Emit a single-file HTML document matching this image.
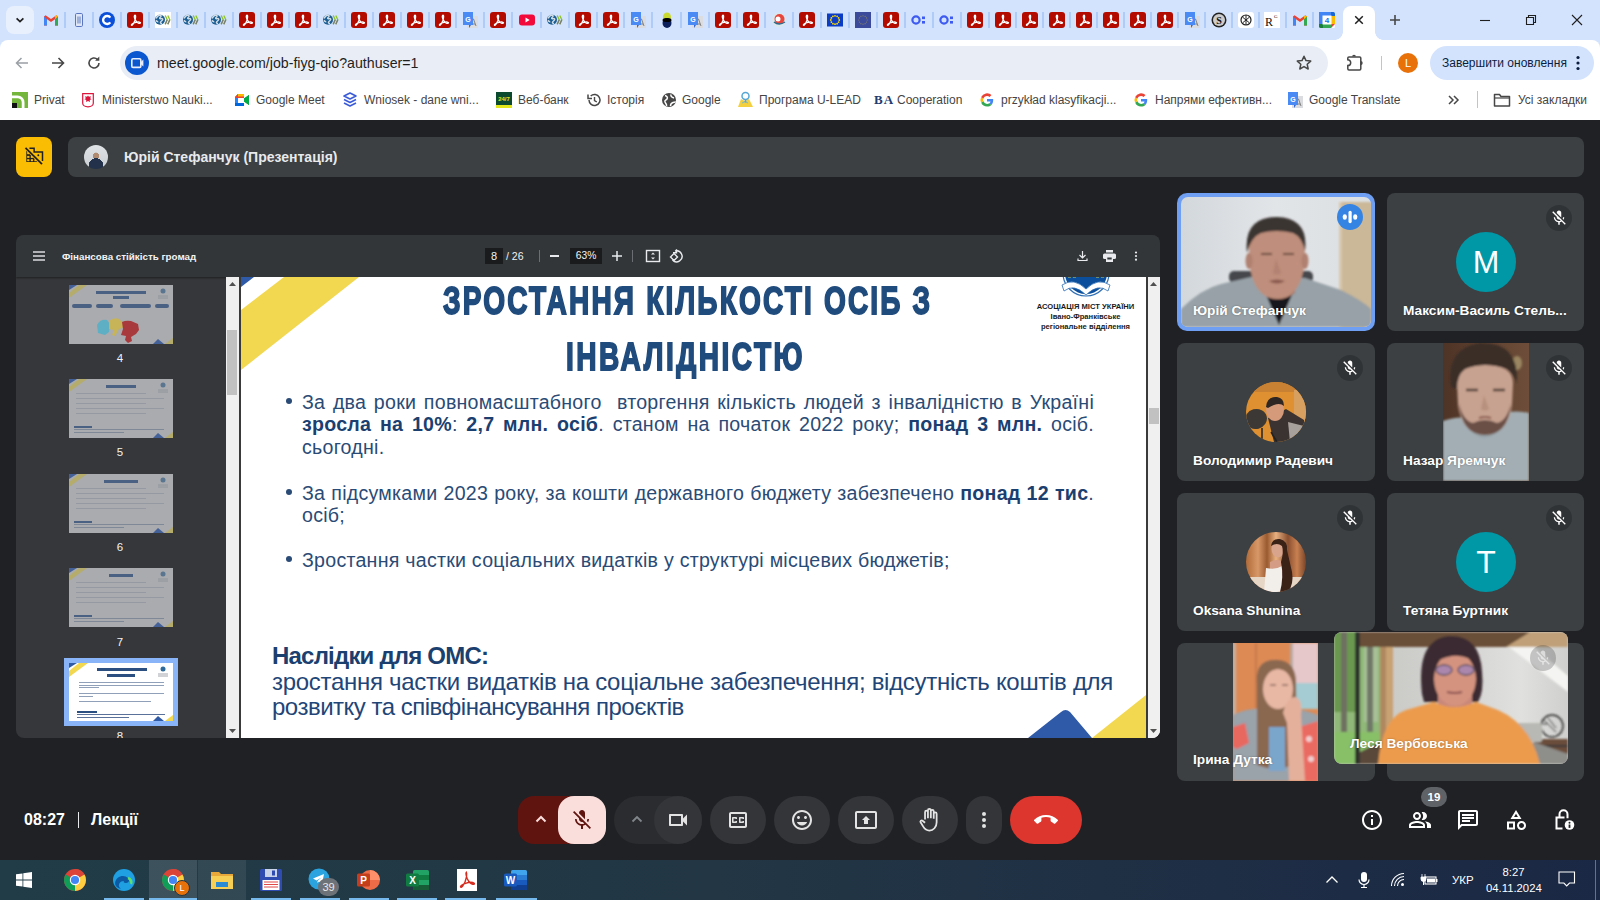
<!DOCTYPE html><html><head><meta charset="utf-8"><style>
*{margin:0;padding:0;box-sizing:border-box}
html,body{width:1600px;height:900px;overflow:hidden;background:#202124;font-family:"Liberation Sans",sans-serif;position:relative}
.a{position:absolute}
svg{display:block;overflow:visible}
.t{position:absolute;white-space:nowrap}
b{font-weight:bold}
</style></head><body>
<div class="a" style="left:0;top:120px;width:1600px;height:740px;background:#202124"></div><div class="a" style="left:0;top:0;width:1600px;height:50px;background:#d3e3fd"></div><div class="a" style="left:6px;top:6px;width:28px;height:28px;border-radius:8px;background:#e9f0fd"></div><svg class="a" style="left:14px;top:14px;" width="12" height="12" viewBox="0 0 12 12"><path d="M2.6 4.3 L6 7.6 L9.4 4.3" fill="none" stroke="#1f1f1f" stroke-width="1.7"/></svg><svg class="a" style="left:43px;top:12px;" width="16" height="16" viewBox="0 0 16 16"><path d="M1 4.5v9h3V7.2L8 10l4-2.8v6.3h3v-9l-1.6-1.2L8 7.1 2.6 3.3z" fill="#ea4335"/><path d="M1 4.5v9h3V7.2z" fill="#4285f4"/><path d="M12 7.2v6.3h3v-9z" fill="#34a853"/><path d="M12 7.2 15 4.5l-1.6-1.2L12 4.3z" fill="#fbbc04"/></svg><div class="a" style="left:64px;top:12px;width:2px;height:16px;background:#afcbf8"></div><svg class="a" style="left:71px;top:12px;" width="16" height="16" viewBox="0 0 16 16"><rect x="4.5" y="1.5" width="7" height="13" rx="1.2" fill="#dfe7f7" stroke="#5b76c0" stroke-width="1"/><path d="M7 4.5v7M9 4.5v7" stroke="#6a82c6" stroke-width="1.1"/></svg><div class="a" style="left:92px;top:12px;width:2px;height:16px;background:#afcbf8"></div><svg class="a" style="left:99px;top:12px;" width="16" height="16" viewBox="0 0 16 16"><circle cx="8" cy="8" r="8" fill="#0b4fd8"/><path d="M11.3 5.6A4 4 0 1 0 11.3 10.4" fill="none" stroke="#fff" stroke-width="2.4"/></svg><div class="a" style="left:120px;top:12px;width:2px;height:16px;background:#afcbf8"></div><svg class="a" style="left:127px;top:12px;" width="16" height="16" viewBox="0 0 16 16"><rect x="0" y="0" width="16" height="16" rx="3" fill="#b30b00"/><path d="M8 3.2c-.9 0-.9 1.6-.2 3.6.6 1.6 1.8 3.4 3.2 4.2 1.3.7 2.6.5 2.5-.3-.1-.7-1.6-.9-3.6-.6-1.9.3-3.9 1.1-5 2.1-.8.7-.5 1.4.2 1 .9-.6 1.9-2.5 2.6-4.3.6-1.7 1-3.1.9-4.2C8.6 3.6 8.4 3.2 8 3.2z" fill="none" stroke="#fff" stroke-width="1.3"/></svg><div class="a" style="left:148px;top:12px;width:2px;height:16px;background:#afcbf8"></div><svg class="a" style="left:155px;top:12px;" width="16" height="16" viewBox="0 0 16 16"><rect width="16" height="16" fill="#fff"/><circle cx="5" cy="7.8" r="5" fill="#1a5d92"/><path d="M1.2 6.5c1-2.5 3-3.5 4.5-3 1 .5 0 1.5-.8 2.3s.5 1.2 1.5.8 1.8.5 1 1.5-2 1.5-2 2.5 1 1 1.5.5M.8 8.5c1 .5 1.5 1.5 2.5 1.2" fill="none" stroke="#d0dde6" stroke-width="1.4"/><path d="M10.2 3.5l2 4.3-2 4.5M12.8 3.5l2 4.3-2 4.5" fill="none" stroke="#8fc22a" stroke-width="1.3"/><path d="M12.2 7.8l-2 4.5M14.8 7.8l-2 4.5" fill="none" stroke="#7a7a7a" stroke-width="1.3"/></svg><div class="a" style="left:176px;top:12px;width:2px;height:16px;background:#afcbf8"></div><svg class="a" style="left:183px;top:12px;" width="16" height="16" viewBox="0 0 16 16"><circle cx="5" cy="7.8" r="5" fill="#1a5d92"/><path d="M1.2 6.5c1-2.5 3-3.5 4.5-3 1 .5 0 1.5-.8 2.3s.5 1.2 1.5.8 1.8.5 1 1.5-2 1.5-2 2.5 1 1 1.5.5M.8 8.5c1 .5 1.5 1.5 2.5 1.2" fill="none" stroke="#d0dde6" stroke-width="1.4"/><path d="M10.2 3.5l2 4.3-2 4.5M12.8 3.5l2 4.3-2 4.5" fill="none" stroke="#8fc22a" stroke-width="1.3"/><path d="M12.2 7.8l-2 4.5M14.8 7.8l-2 4.5" fill="none" stroke="#7a7a7a" stroke-width="1.3"/></svg><div class="a" style="left:204px;top:12px;width:2px;height:16px;background:#afcbf8"></div><svg class="a" style="left:211px;top:12px;" width="16" height="16" viewBox="0 0 16 16"><circle cx="5" cy="7.8" r="5" fill="#1a5d92"/><path d="M1.2 6.5c1-2.5 3-3.5 4.5-3 1 .5 0 1.5-.8 2.3s.5 1.2 1.5.8 1.8.5 1 1.5-2 1.5-2 2.5 1 1 1.5.5M.8 8.5c1 .5 1.5 1.5 2.5 1.2" fill="none" stroke="#d0dde6" stroke-width="1.4"/><path d="M10.2 3.5l2 4.3-2 4.5M12.8 3.5l2 4.3-2 4.5" fill="none" stroke="#8fc22a" stroke-width="1.3"/><path d="M12.2 7.8l-2 4.5M14.8 7.8l-2 4.5" fill="none" stroke="#7a7a7a" stroke-width="1.3"/></svg><div class="a" style="left:232px;top:12px;width:2px;height:16px;background:#afcbf8"></div><svg class="a" style="left:239px;top:12px;" width="16" height="16" viewBox="0 0 16 16"><rect x="0" y="0" width="16" height="16" rx="3" fill="#b30b00"/><path d="M8 3.2c-.9 0-.9 1.6-.2 3.6.6 1.6 1.8 3.4 3.2 4.2 1.3.7 2.6.5 2.5-.3-.1-.7-1.6-.9-3.6-.6-1.9.3-3.9 1.1-5 2.1-.8.7-.5 1.4.2 1 .9-.6 1.9-2.5 2.6-4.3.6-1.7 1-3.1.9-4.2C8.6 3.6 8.4 3.2 8 3.2z" fill="none" stroke="#fff" stroke-width="1.3"/></svg><div class="a" style="left:260px;top:12px;width:2px;height:16px;background:#afcbf8"></div><svg class="a" style="left:267px;top:12px;" width="16" height="16" viewBox="0 0 16 16"><rect x="0" y="0" width="16" height="16" rx="3" fill="#b30b00"/><path d="M8 3.2c-.9 0-.9 1.6-.2 3.6.6 1.6 1.8 3.4 3.2 4.2 1.3.7 2.6.5 2.5-.3-.1-.7-1.6-.9-3.6-.6-1.9.3-3.9 1.1-5 2.1-.8.7-.5 1.4.2 1 .9-.6 1.9-2.5 2.6-4.3.6-1.7 1-3.1.9-4.2C8.6 3.6 8.4 3.2 8 3.2z" fill="none" stroke="#fff" stroke-width="1.3"/></svg><div class="a" style="left:288px;top:12px;width:2px;height:16px;background:#afcbf8"></div><svg class="a" style="left:295px;top:12px;" width="16" height="16" viewBox="0 0 16 16"><rect x="0" y="0" width="16" height="16" rx="3" fill="#b30b00"/><path d="M8 3.2c-.9 0-.9 1.6-.2 3.6.6 1.6 1.8 3.4 3.2 4.2 1.3.7 2.6.5 2.5-.3-.1-.7-1.6-.9-3.6-.6-1.9.3-3.9 1.1-5 2.1-.8.7-.5 1.4.2 1 .9-.6 1.9-2.5 2.6-4.3.6-1.7 1-3.1.9-4.2C8.6 3.6 8.4 3.2 8 3.2z" fill="none" stroke="#fff" stroke-width="1.3"/></svg><div class="a" style="left:316px;top:12px;width:2px;height:16px;background:#afcbf8"></div><svg class="a" style="left:323px;top:12px;" width="16" height="16" viewBox="0 0 16 16"><circle cx="5" cy="7.8" r="5" fill="#1a5d92"/><path d="M1.2 6.5c1-2.5 3-3.5 4.5-3 1 .5 0 1.5-.8 2.3s.5 1.2 1.5.8 1.8.5 1 1.5-2 1.5-2 2.5 1 1 1.5.5M.8 8.5c1 .5 1.5 1.5 2.5 1.2" fill="none" stroke="#d0dde6" stroke-width="1.4"/><path d="M10.2 3.5l2 4.3-2 4.5M12.8 3.5l2 4.3-2 4.5" fill="none" stroke="#8fc22a" stroke-width="1.3"/><path d="M12.2 7.8l-2 4.5M14.8 7.8l-2 4.5" fill="none" stroke="#7a7a7a" stroke-width="1.3"/></svg><div class="a" style="left:344px;top:12px;width:2px;height:16px;background:#afcbf8"></div><svg class="a" style="left:351px;top:12px;" width="16" height="16" viewBox="0 0 16 16"><rect x="0" y="0" width="16" height="16" rx="3" fill="#b30b00"/><path d="M8 3.2c-.9 0-.9 1.6-.2 3.6.6 1.6 1.8 3.4 3.2 4.2 1.3.7 2.6.5 2.5-.3-.1-.7-1.6-.9-3.6-.6-1.9.3-3.9 1.1-5 2.1-.8.7-.5 1.4.2 1 .9-.6 1.9-2.5 2.6-4.3.6-1.7 1-3.1.9-4.2C8.6 3.6 8.4 3.2 8 3.2z" fill="none" stroke="#fff" stroke-width="1.3"/></svg><div class="a" style="left:372px;top:12px;width:2px;height:16px;background:#afcbf8"></div><svg class="a" style="left:379px;top:12px;" width="16" height="16" viewBox="0 0 16 16"><rect x="0" y="0" width="16" height="16" rx="3" fill="#b30b00"/><path d="M8 3.2c-.9 0-.9 1.6-.2 3.6.6 1.6 1.8 3.4 3.2 4.2 1.3.7 2.6.5 2.5-.3-.1-.7-1.6-.9-3.6-.6-1.9.3-3.9 1.1-5 2.1-.8.7-.5 1.4.2 1 .9-.6 1.9-2.5 2.6-4.3.6-1.7 1-3.1.9-4.2C8.6 3.6 8.4 3.2 8 3.2z" fill="none" stroke="#fff" stroke-width="1.3"/></svg><div class="a" style="left:400px;top:12px;width:2px;height:16px;background:#afcbf8"></div><svg class="a" style="left:407px;top:12px;" width="16" height="16" viewBox="0 0 16 16"><rect x="0" y="0" width="16" height="16" rx="3" fill="#b30b00"/><path d="M8 3.2c-.9 0-.9 1.6-.2 3.6.6 1.6 1.8 3.4 3.2 4.2 1.3.7 2.6.5 2.5-.3-.1-.7-1.6-.9-3.6-.6-1.9.3-3.9 1.1-5 2.1-.8.7-.5 1.4.2 1 .9-.6 1.9-2.5 2.6-4.3.6-1.7 1-3.1.9-4.2C8.6 3.6 8.4 3.2 8 3.2z" fill="none" stroke="#fff" stroke-width="1.3"/></svg><div class="a" style="left:428px;top:12px;width:2px;height:16px;background:#afcbf8"></div><svg class="a" style="left:435px;top:12px;" width="16" height="16" viewBox="0 0 16 16"><rect x="0" y="0" width="16" height="16" rx="3" fill="#b30b00"/><path d="M8 3.2c-.9 0-.9 1.6-.2 3.6.6 1.6 1.8 3.4 3.2 4.2 1.3.7 2.6.5 2.5-.3-.1-.7-1.6-.9-3.6-.6-1.9.3-3.9 1.1-5 2.1-.8.7-.5 1.4.2 1 .9-.6 1.9-2.5 2.6-4.3.6-1.7 1-3.1.9-4.2C8.6 3.6 8.4 3.2 8 3.2z" fill="none" stroke="#fff" stroke-width="1.3"/></svg><div class="a" style="left:455px;top:12px;width:2px;height:16px;background:#afcbf8"></div><svg class="a" style="left:462px;top:12px;" width="16" height="16" viewBox="0 0 16 16"><rect x="5" y="4" width="11" height="12" fill="#dadce0"/><path d="M9 9l2.5-2 2.5 7M10 12h3" stroke="#777" stroke-width=".9" fill="none"/><path d="M1 0h10v13H1z" fill="#4a8af4"/><path d="M9 13l-2 3v-3z" fill="#3367d6"/><text x="6" y="9.5" font-size="7" font-weight="bold" fill="#fff" text-anchor="middle" font-family="Liberation Sans">G</text></svg><div class="a" style="left:483px;top:12px;width:2px;height:16px;background:#afcbf8"></div><svg class="a" style="left:490px;top:12px;" width="16" height="16" viewBox="0 0 16 16"><rect x="0" y="0" width="16" height="16" rx="3" fill="#b30b00"/><path d="M8 3.2c-.9 0-.9 1.6-.2 3.6.6 1.6 1.8 3.4 3.2 4.2 1.3.7 2.6.5 2.5-.3-.1-.7-1.6-.9-3.6-.6-1.9.3-3.9 1.1-5 2.1-.8.7-.5 1.4.2 1 .9-.6 1.9-2.5 2.6-4.3.6-1.7 1-3.1.9-4.2C8.6 3.6 8.4 3.2 8 3.2z" fill="none" stroke="#fff" stroke-width="1.3"/></svg><div class="a" style="left:511px;top:12px;width:2px;height:16px;background:#afcbf8"></div><svg class="a" style="left:519px;top:12px;" width="16" height="16" viewBox="0 0 16 16"><rect x="0" y="2.5" width="16" height="11" rx="3" fill="#f20a3b"/><path d="M6.5 5.5v5l4.2-2.5z" fill="#fff"/></svg><div class="a" style="left:540px;top:12px;width:2px;height:16px;background:#afcbf8"></div><svg class="a" style="left:547px;top:12px;" width="16" height="16" viewBox="0 0 16 16"><circle cx="5" cy="7.8" r="5" fill="#1a5d92"/><path d="M1.2 6.5c1-2.5 3-3.5 4.5-3 1 .5 0 1.5-.8 2.3s.5 1.2 1.5.8 1.8.5 1 1.5-2 1.5-2 2.5 1 1 1.5.5M.8 8.5c1 .5 1.5 1.5 2.5 1.2" fill="none" stroke="#d0dde6" stroke-width="1.4"/><path d="M10.2 3.5l2 4.3-2 4.5M12.8 3.5l2 4.3-2 4.5" fill="none" stroke="#8fc22a" stroke-width="1.3"/><path d="M12.2 7.8l-2 4.5M14.8 7.8l-2 4.5" fill="none" stroke="#7a7a7a" stroke-width="1.3"/></svg><div class="a" style="left:568px;top:12px;width:2px;height:16px;background:#afcbf8"></div><svg class="a" style="left:575px;top:12px;" width="16" height="16" viewBox="0 0 16 16"><rect x="0" y="0" width="16" height="16" rx="3" fill="#b30b00"/><path d="M8 3.2c-.9 0-.9 1.6-.2 3.6.6 1.6 1.8 3.4 3.2 4.2 1.3.7 2.6.5 2.5-.3-.1-.7-1.6-.9-3.6-.6-1.9.3-3.9 1.1-5 2.1-.8.7-.5 1.4.2 1 .9-.6 1.9-2.5 2.6-4.3.6-1.7 1-3.1.9-4.2C8.6 3.6 8.4 3.2 8 3.2z" fill="none" stroke="#fff" stroke-width="1.3"/></svg><div class="a" style="left:596px;top:12px;width:2px;height:16px;background:#afcbf8"></div><svg class="a" style="left:603px;top:12px;" width="16" height="16" viewBox="0 0 16 16"><rect x="0" y="0" width="16" height="16" rx="3" fill="#b30b00"/><path d="M8 3.2c-.9 0-.9 1.6-.2 3.6.6 1.6 1.8 3.4 3.2 4.2 1.3.7 2.6.5 2.5-.3-.1-.7-1.6-.9-3.6-.6-1.9.3-3.9 1.1-5 2.1-.8.7-.5 1.4.2 1 .9-.6 1.9-2.5 2.6-4.3.6-1.7 1-3.1.9-4.2C8.6 3.6 8.4 3.2 8 3.2z" fill="none" stroke="#fff" stroke-width="1.3"/></svg><div class="a" style="left:623px;top:12px;width:2px;height:16px;background:#afcbf8"></div><svg class="a" style="left:630px;top:12px;" width="16" height="16" viewBox="0 0 16 16"><rect x="5" y="4" width="11" height="12" fill="#dadce0"/><path d="M9 9l2.5-2 2.5 7M10 12h3" stroke="#777" stroke-width=".9" fill="none"/><path d="M1 0h10v13H1z" fill="#4a8af4"/><path d="M9 13l-2 3v-3z" fill="#3367d6"/><text x="6" y="9.5" font-size="7" font-weight="bold" fill="#fff" text-anchor="middle" font-family="Liberation Sans">G</text></svg><div class="a" style="left:651px;top:12px;width:2px;height:16px;background:#afcbf8"></div><svg class="a" style="left:659px;top:12px;" width="16" height="16" viewBox="0 0 16 16"><ellipse cx="8" cy="5" rx="4" ry="4.5" fill="#c9d92f"/><ellipse cx="8" cy="11" rx="4.5" ry="5" fill="#0a1f5c"/><ellipse cx="8" cy="8" rx="4.5" ry="2" fill="#000"/></svg><div class="a" style="left:680px;top:12px;width:2px;height:16px;background:#afcbf8"></div><svg class="a" style="left:687px;top:12px;" width="16" height="16" viewBox="0 0 16 16"><rect x="5" y="4" width="11" height="12" fill="#dadce0"/><path d="M9 9l2.5-2 2.5 7M10 12h3" stroke="#777" stroke-width=".9" fill="none"/><path d="M1 0h10v13H1z" fill="#4a8af4"/><path d="M9 13l-2 3v-3z" fill="#3367d6"/><text x="6" y="9.5" font-size="7" font-weight="bold" fill="#fff" text-anchor="middle" font-family="Liberation Sans">G</text></svg><div class="a" style="left:708px;top:12px;width:2px;height:16px;background:#afcbf8"></div><svg class="a" style="left:715px;top:12px;" width="16" height="16" viewBox="0 0 16 16"><rect x="0" y="0" width="16" height="16" rx="3" fill="#b30b00"/><path d="M8 3.2c-.9 0-.9 1.6-.2 3.6.6 1.6 1.8 3.4 3.2 4.2 1.3.7 2.6.5 2.5-.3-.1-.7-1.6-.9-3.6-.6-1.9.3-3.9 1.1-5 2.1-.8.7-.5 1.4.2 1 .9-.6 1.9-2.5 2.6-4.3.6-1.7 1-3.1.9-4.2C8.6 3.6 8.4 3.2 8 3.2z" fill="none" stroke="#fff" stroke-width="1.3"/></svg><div class="a" style="left:736px;top:12px;width:2px;height:16px;background:#afcbf8"></div><svg class="a" style="left:743px;top:12px;" width="16" height="16" viewBox="0 0 16 16"><rect x="0" y="0" width="16" height="16" rx="3" fill="#b30b00"/><path d="M8 3.2c-.9 0-.9 1.6-.2 3.6.6 1.6 1.8 3.4 3.2 4.2 1.3.7 2.6.5 2.5-.3-.1-.7-1.6-.9-3.6-.6-1.9.3-3.9 1.1-5 2.1-.8.7-.5 1.4.2 1 .9-.6 1.9-2.5 2.6-4.3.6-1.7 1-3.1.9-4.2C8.6 3.6 8.4 3.2 8 3.2z" fill="none" stroke="#fff" stroke-width="1.3"/></svg><div class="a" style="left:764px;top:12px;width:2px;height:16px;background:#afcbf8"></div><svg class="a" style="left:771px;top:12px;" width="16" height="16" viewBox="0 0 16 16"><circle cx="8" cy="8" r="7.5" fill="#d8e6ee"/><circle cx="8.5" cy="7" r="5" fill="#e8453c"/><path d="M3 10q5 4 11 0" stroke="#2d6a8a" stroke-width="1.5" fill="none"/><circle cx="7" cy="7" r="2.5" fill="#fff"/></svg><div class="a" style="left:792px;top:12px;width:2px;height:16px;background:#afcbf8"></div><svg class="a" style="left:799px;top:12px;" width="16" height="16" viewBox="0 0 16 16"><rect x="0" y="0" width="16" height="16" rx="3" fill="#b30b00"/><path d="M8 3.2c-.9 0-.9 1.6-.2 3.6.6 1.6 1.8 3.4 3.2 4.2 1.3.7 2.6.5 2.5-.3-.1-.7-1.6-.9-3.6-.6-1.9.3-3.9 1.1-5 2.1-.8.7-.5 1.4.2 1 .9-.6 1.9-2.5 2.6-4.3.6-1.7 1-3.1.9-4.2C8.6 3.6 8.4 3.2 8 3.2z" fill="none" stroke="#fff" stroke-width="1.3"/></svg><div class="a" style="left:820px;top:12px;width:2px;height:16px;background:#afcbf8"></div><svg class="a" style="left:827px;top:12px;" width="16" height="16" viewBox="0 0 16 16"><rect x="0" y="1.5" width="16" height="13" fill="#0b3cc5"/><circle cx="12.20" cy="8.00" r=".9" fill="#ffdd00"/><circle cx="11.64" cy="10.10" r=".9" fill="#ffdd00"/><circle cx="10.10" cy="11.64" r=".9" fill="#ffdd00"/><circle cx="8.00" cy="12.20" r=".9" fill="#ffdd00"/><circle cx="5.90" cy="11.64" r=".9" fill="#ffdd00"/><circle cx="4.36" cy="10.10" r=".9" fill="#ffdd00"/><circle cx="3.80" cy="8.00" r=".9" fill="#ffdd00"/><circle cx="4.36" cy="5.90" r=".9" fill="#ffdd00"/><circle cx="5.90" cy="4.36" r=".9" fill="#ffdd00"/><circle cx="8.00" cy="3.80" r=".9" fill="#ffdd00"/><circle cx="10.10" cy="4.36" r=".9" fill="#ffdd00"/><circle cx="11.64" cy="5.90" r=".9" fill="#ffdd00"/></svg><div class="a" style="left:848px;top:12px;width:2px;height:16px;background:#afcbf8"></div><svg class="a" style="left:855px;top:12px;" width="16" height="16" viewBox="0 0 16 16"><rect x="0" y="0" width="16" height="16" fill="#3b4a9a"/><circle cx="12.20" cy="8.00" r=".6" fill="#8a8560"/><circle cx="11.64" cy="10.10" r=".6" fill="#8a8560"/><circle cx="10.10" cy="11.64" r=".6" fill="#8a8560"/><circle cx="8.00" cy="12.20" r=".6" fill="#8a8560"/><circle cx="5.90" cy="11.64" r=".6" fill="#8a8560"/><circle cx="4.36" cy="10.10" r=".6" fill="#8a8560"/><circle cx="3.80" cy="8.00" r=".6" fill="#8a8560"/><circle cx="4.36" cy="5.90" r=".6" fill="#8a8560"/><circle cx="5.90" cy="4.36" r=".6" fill="#8a8560"/><circle cx="8.00" cy="3.80" r=".6" fill="#8a8560"/><circle cx="10.10" cy="4.36" r=".6" fill="#8a8560"/><circle cx="11.64" cy="5.90" r=".6" fill="#8a8560"/></svg><div class="a" style="left:876px;top:12px;width:2px;height:16px;background:#afcbf8"></div><svg class="a" style="left:883px;top:12px;" width="16" height="16" viewBox="0 0 16 16"><rect x="0" y="0" width="16" height="16" rx="3" fill="#b30b00"/><path d="M8 3.2c-.9 0-.9 1.6-.2 3.6.6 1.6 1.8 3.4 3.2 4.2 1.3.7 2.6.5 2.5-.3-.1-.7-1.6-.9-3.6-.6-1.9.3-3.9 1.1-5 2.1-.8.7-.5 1.4.2 1 .9-.6 1.9-2.5 2.6-4.3.6-1.7 1-3.1.9-4.2C8.6 3.6 8.4 3.2 8 3.2z" fill="none" stroke="#fff" stroke-width="1.3"/></svg><div class="a" style="left:904px;top:12px;width:2px;height:16px;background:#afcbf8"></div><svg class="a" style="left:911px;top:12px;" width="16" height="16" viewBox="0 0 16 16"><circle cx="5" cy="8" r="3.6" fill="none" stroke="#3d5af1" stroke-width="2.2"/><rect x="11" y="4.5" width="3" height="2.6" fill="#3d5af1"/><rect x="11" y="9" width="3" height="2.6" fill="#3d5af1"/></svg><div class="a" style="left:932px;top:12px;width:2px;height:16px;background:#afcbf8"></div><svg class="a" style="left:939px;top:12px;" width="16" height="16" viewBox="0 0 16 16"><circle cx="5" cy="8" r="3.6" fill="none" stroke="#3d5af1" stroke-width="2.2"/><rect x="11" y="4.5" width="3" height="2.6" fill="#3d5af1"/><rect x="11" y="9" width="3" height="2.6" fill="#3d5af1"/></svg><div class="a" style="left:960px;top:12px;width:2px;height:16px;background:#afcbf8"></div><svg class="a" style="left:967px;top:12px;" width="16" height="16" viewBox="0 0 16 16"><rect x="0" y="0" width="16" height="16" rx="3" fill="#b30b00"/><path d="M8 3.2c-.9 0-.9 1.6-.2 3.6.6 1.6 1.8 3.4 3.2 4.2 1.3.7 2.6.5 2.5-.3-.1-.7-1.6-.9-3.6-.6-1.9.3-3.9 1.1-5 2.1-.8.7-.5 1.4.2 1 .9-.6 1.9-2.5 2.6-4.3.6-1.7 1-3.1.9-4.2C8.6 3.6 8.4 3.2 8 3.2z" fill="none" stroke="#fff" stroke-width="1.3"/></svg><div class="a" style="left:988px;top:12px;width:2px;height:16px;background:#afcbf8"></div><svg class="a" style="left:995px;top:12px;" width="16" height="16" viewBox="0 0 16 16"><rect x="0" y="0" width="16" height="16" rx="3" fill="#b30b00"/><path d="M8 3.2c-.9 0-.9 1.6-.2 3.6.6 1.6 1.8 3.4 3.2 4.2 1.3.7 2.6.5 2.5-.3-.1-.7-1.6-.9-3.6-.6-1.9.3-3.9 1.1-5 2.1-.8.7-.5 1.4.2 1 .9-.6 1.9-2.5 2.6-4.3.6-1.7 1-3.1.9-4.2C8.6 3.6 8.4 3.2 8 3.2z" fill="none" stroke="#fff" stroke-width="1.3"/></svg><div class="a" style="left:1015px;top:12px;width:2px;height:16px;background:#afcbf8"></div><svg class="a" style="left:1022px;top:12px;" width="16" height="16" viewBox="0 0 16 16"><rect x="0" y="0" width="16" height="16" rx="3" fill="#b30b00"/><path d="M8 3.2c-.9 0-.9 1.6-.2 3.6.6 1.6 1.8 3.4 3.2 4.2 1.3.7 2.6.5 2.5-.3-.1-.7-1.6-.9-3.6-.6-1.9.3-3.9 1.1-5 2.1-.8.7-.5 1.4.2 1 .9-.6 1.9-2.5 2.6-4.3.6-1.7 1-3.1.9-4.2C8.6 3.6 8.4 3.2 8 3.2z" fill="none" stroke="#fff" stroke-width="1.3"/></svg><div class="a" style="left:1042px;top:12px;width:2px;height:16px;background:#afcbf8"></div><svg class="a" style="left:1049px;top:12px;" width="16" height="16" viewBox="0 0 16 16"><rect x="0" y="0" width="16" height="16" rx="3" fill="#b30b00"/><path d="M8 3.2c-.9 0-.9 1.6-.2 3.6.6 1.6 1.8 3.4 3.2 4.2 1.3.7 2.6.5 2.5-.3-.1-.7-1.6-.9-3.6-.6-1.9.3-3.9 1.1-5 2.1-.8.7-.5 1.4.2 1 .9-.6 1.9-2.5 2.6-4.3.6-1.7 1-3.1.9-4.2C8.6 3.6 8.4 3.2 8 3.2z" fill="none" stroke="#fff" stroke-width="1.3"/></svg><div class="a" style="left:1069px;top:12px;width:2px;height:16px;background:#afcbf8"></div><svg class="a" style="left:1076px;top:12px;" width="16" height="16" viewBox="0 0 16 16"><rect x="0" y="0" width="16" height="16" rx="3" fill="#b30b00"/><path d="M8 3.2c-.9 0-.9 1.6-.2 3.6.6 1.6 1.8 3.4 3.2 4.2 1.3.7 2.6.5 2.5-.3-.1-.7-1.6-.9-3.6-.6-1.9.3-3.9 1.1-5 2.1-.8.7-.5 1.4.2 1 .9-.6 1.9-2.5 2.6-4.3.6-1.7 1-3.1.9-4.2C8.6 3.6 8.4 3.2 8 3.2z" fill="none" stroke="#fff" stroke-width="1.3"/></svg><div class="a" style="left:1096px;top:12px;width:2px;height:16px;background:#afcbf8"></div><svg class="a" style="left:1103px;top:12px;" width="16" height="16" viewBox="0 0 16 16"><rect x="0" y="0" width="16" height="16" rx="3" fill="#b30b00"/><path d="M8 3.2c-.9 0-.9 1.6-.2 3.6.6 1.6 1.8 3.4 3.2 4.2 1.3.7 2.6.5 2.5-.3-.1-.7-1.6-.9-3.6-.6-1.9.3-3.9 1.1-5 2.1-.8.7-.5 1.4.2 1 .9-.6 1.9-2.5 2.6-4.3.6-1.7 1-3.1.9-4.2C8.6 3.6 8.4 3.2 8 3.2z" fill="none" stroke="#fff" stroke-width="1.3"/></svg><div class="a" style="left:1123px;top:12px;width:2px;height:16px;background:#afcbf8"></div><svg class="a" style="left:1130px;top:12px;" width="16" height="16" viewBox="0 0 16 16"><rect x="0" y="0" width="16" height="16" rx="3" fill="#b30b00"/><path d="M8 3.2c-.9 0-.9 1.6-.2 3.6.6 1.6 1.8 3.4 3.2 4.2 1.3.7 2.6.5 2.5-.3-.1-.7-1.6-.9-3.6-.6-1.9.3-3.9 1.1-5 2.1-.8.7-.5 1.4.2 1 .9-.6 1.9-2.5 2.6-4.3.6-1.7 1-3.1.9-4.2C8.6 3.6 8.4 3.2 8 3.2z" fill="none" stroke="#fff" stroke-width="1.3"/></svg><div class="a" style="left:1150px;top:12px;width:2px;height:16px;background:#afcbf8"></div><svg class="a" style="left:1157px;top:12px;" width="16" height="16" viewBox="0 0 16 16"><rect x="0" y="0" width="16" height="16" rx="3" fill="#b30b00"/><path d="M8 3.2c-.9 0-.9 1.6-.2 3.6.6 1.6 1.8 3.4 3.2 4.2 1.3.7 2.6.5 2.5-.3-.1-.7-1.6-.9-3.6-.6-1.9.3-3.9 1.1-5 2.1-.8.7-.5 1.4.2 1 .9-.6 1.9-2.5 2.6-4.3.6-1.7 1-3.1.9-4.2C8.6 3.6 8.4 3.2 8 3.2z" fill="none" stroke="#fff" stroke-width="1.3"/></svg><div class="a" style="left:1177px;top:12px;width:2px;height:16px;background:#afcbf8"></div><svg class="a" style="left:1184px;top:12px;" width="16" height="16" viewBox="0 0 16 16"><rect x="5" y="4" width="11" height="12" fill="#dadce0"/><path d="M9 9l2.5-2 2.5 7M10 12h3" stroke="#777" stroke-width=".9" fill="none"/><path d="M1 0h10v13H1z" fill="#4a8af4"/><path d="M9 13l-2 3v-3z" fill="#3367d6"/><text x="6" y="9.5" font-size="7" font-weight="bold" fill="#fff" text-anchor="middle" font-family="Liberation Sans">G</text></svg><div class="a" style="left:1204px;top:12px;width:2px;height:16px;background:#afcbf8"></div><svg class="a" style="left:1211px;top:12px;" width="16" height="16" viewBox="0 0 16 16"><circle cx="8" cy="8" r="7.5" fill="#222"/><circle cx="8" cy="8" r="6" fill="#ccc"/><text x="8" y="11.5" font-size="10" font-weight="bold" fill="#111" text-anchor="middle" font-family="Liberation Serif">S</text></svg><div class="a" style="left:1231px;top:12px;width:2px;height:16px;background:#afcbf8"></div><svg class="a" style="left:1238px;top:12px;" width="16" height="16" viewBox="0 0 16 16"><rect width="16" height="16" rx="3" fill="#fff"/><circle cx="8" cy="8" r="5" fill="none" stroke="#222" stroke-width="1.2"/><path d="M5 5.5l6 5M11 5.5l-6 5M8 3v10" stroke="#222" stroke-width="1"/></svg><div class="a" style="left:1258px;top:12px;width:2px;height:16px;background:#afcbf8"></div><svg class="a" style="left:1264px;top:12px;" width="16" height="16" viewBox="0 0 16 16"><rect width="16" height="16" fill="#fff"/><text x="1" y="14" font-size="12" fill="#111" font-family="Liberation Serif">R</text><text x="10" y="6" font-size="5" fill="#111" font-family="Liberation Serif">G</text></svg><div class="a" style="left:1285px;top:12px;width:2px;height:16px;background:#afcbf8"></div><svg class="a" style="left:1292px;top:12px;" width="16" height="16" viewBox="0 0 16 16"><path d="M1 4.5v9h3V7.2L8 10l4-2.8v6.3h3v-9l-1.6-1.2L8 7.1 2.6 3.3z" fill="#ea4335"/><path d="M1 4.5v9h3V7.2z" fill="#4285f4"/><path d="M12 7.2v6.3h3v-9z" fill="#34a853"/><path d="M12 7.2 15 4.5l-1.6-1.2L12 4.3z" fill="#fbbc04"/></svg><div class="a" style="left:1312px;top:12px;width:2px;height:16px;background:#afcbf8"></div><svg class="a" style="left:1319px;top:12px;" width="16" height="16" viewBox="0 0 16 16"><rect x="0" y="0" width="16" height="16" rx="1.5" fill="#fff"/><path d="M0 0h12v4H4v8H0z" fill="#4285f4"/><path d="M12 0h2.5A1.5 1.5 0 0 1 16 1.5V4h-4z" fill="#1967d2"/><path d="M12 4h4v8h-4z" fill="#fbbc04"/><path d="M4 12h8v4H4z" fill="#34a853"/><path d="M12 12h4l-4 4z" fill="#ea4335"/><path d="M0 12h4v4H1.5A1.5 1.5 0 0 1 0 14.5z" fill="#188038"/><rect x="3.5" y="3.5" width="9" height="9" fill="#fff"/><text x="8" y="11" font-size="8" fill="#1a73e8" text-anchor="middle" font-family="Liberation Sans" font-weight="bold">4</text></svg><div class="a" style="left:1343px;top:6px;width:32px;height:40px;background:#fff;border-radius:8px 8px 0 0"></div><div class="a" style="left:1335px;top:32px;width:8px;height:8px;background:radial-gradient(circle at 0 0,#d3e3fd 7.5px,#fff 8px)"></div><div class="a" style="left:1375px;top:32px;width:8px;height:8px;background:radial-gradient(circle at 100% 0,#d3e3fd 7.5px,#fff 8px)"></div><svg class="a" style="left:1353px;top:14px;" width="12" height="12" viewBox="0 0 12 12"><path d="M2.2 2.2L9.8 9.8M9.8 2.2L2.2 9.8" stroke="#1f1f1f" stroke-width="1.5"/></svg><svg class="a" style="left:1388px;top:13px;" width="14" height="14" viewBox="0 0 14 14"><path d="M7 2v10M2 7h10" stroke="#474747" stroke-width="1.6"/></svg><svg class="a" style="left:1479px;top:14px;" width="12" height="12" viewBox="0 0 12 12"><path d="M1 6.5h10" stroke="#1f1f1f" stroke-width="1.1"/></svg><svg class="a" style="left:1525px;top:14px;" width="12" height="12" viewBox="0 0 12 12"><path d="M1.5 3.5h7v7h-7z M3.5 3.5v-2h7v7h-2" fill="none" stroke="#1f1f1f" stroke-width="1.1"/></svg><svg class="a" style="left:1571px;top:14px;" width="12" height="12" viewBox="0 0 12 12"><path d="M1 1L11 11M11 1L1 11" stroke="#1f1f1f" stroke-width="1.1"/></svg><div class="a" style="left:0;top:40px;width:1600px;height:80px;background:#fff;border-radius:8px 8px 0 0"></div><div class="a" style="left:0;top:40px;width:8px;height:8px;background:#d3e3fd"></div><div class="a" style="left:0;top:40px;width:16px;height:16px;background:#fff;border-radius:8px 0 0 0"></div><svg class="a" style="left:14px;top:55px;" width="16" height="16" viewBox="0 0 16 16"><path d="M14 8H2.5M7.5 3L2.5 8l5 5" fill="none" stroke="#9aa0a6" stroke-width="1.5"/></svg><svg class="a" style="left:50px;top:55px;" width="16" height="16" viewBox="0 0 16 16"><path d="M2 8h11.5M8.5 3l5 5-5 5" fill="none" stroke="#474747" stroke-width="1.6"/></svg><svg class="a" style="left:86px;top:55px;" width="16" height="16" viewBox="0 0 16 16"><path d="M13 8a5 5 0 1 1-1.6-3.7" fill="none" stroke="#474747" stroke-width="1.6"/><path d="M13.3 1.5v4.2H9.1z" fill="#474747"/></svg><div class="a" style="left:120px;top:46px;width:1208px;height:34px;border-radius:17px;background:#e9eef6"></div><div class="a" style="left:125px;top:51px;width:24px;height:24px;border-radius:12px;background:#0b57d0"></div><svg class="a" style="left:130px;top:56px;" width="14" height="14" viewBox="0 0 14 14"><rect x="1.8" y="2.8" width="9" height="8.6" rx="1.2" fill="none" stroke="#e8eefa" stroke-width="1.6"/><path d="M10.8 6l2.6-2.4v7L10.8 8.3z" fill="#e8eefa"/></svg><div class="t" style="left:157px;top:55px;font-size:14.2px;line-height:17px;color:#1f1f1f">meet.google.com/job-fiyg-qio?authuser=1</div><svg class="a" style="left:1295px;top:54px;" width="18" height="18" viewBox="0 0 18 18"><path d="M9 2.2l2 4.4 4.7.5-3.5 3.2 1 4.7L9 12.6 4.8 15l1-4.7L2.3 7.1 7 6.6z" fill="none" stroke="#474747" stroke-width="1.5" stroke-linejoin="round"/></svg><svg class="a" style="left:1340px;top:50px;" width="32" height="26" viewBox="0 0 32 26"><path d="M9 6.9H19.6a1.2 1.2 0 0 1 1.2 1.2V18.7a1.2 1.2 0 0 1-1.2 1.2H9a1.2 1.2 0 0 1-1.2-1.2V15.6A2.9 2.9 0 0 0 7.8 9.8V8.1A1.2 1.2 0 0 1 9 6.9z" fill="none" stroke="#474747" stroke-width="1.5"/><path d="M12.1 6.6A1.9 1.9 0 0 1 15.9 6.6z" fill="#474747"/><path d="M20.6 11A2.1 2.1 0 0 1 20.6 15.2z" fill="#474747"/></svg><div class="a" style="left:1381px;top:56px;width:1px;height:14px;background:#a8c7fa"></div><div class="a" style="left:1398px;top:53px;width:20px;height:20px;border-radius:10px;background:#e8710a"></div><div class="t" style="left:1398px;top:56px;width:20px;text-align:center;font-size:11px;line-height:14px;color:#fff">L</div><div class="a" style="left:1430px;top:46px;width:164px;height:34px;border-radius:17px;background:#d3e3fd"></div><div class="t" style="left:1442px;top:56px;font-size:12px;line-height:15px;color:#0b1d3f">Завершити оновлення</div><svg class="a" style="left:1572px;top:54px;" width="12" height="18" viewBox="0 0 12 18"><circle cx="6" cy="3.5" r="1.6" fill="#0b1d3f"/><circle cx="6" cy="9" r="1.6" fill="#0b1d3f"/><circle cx="6" cy="14.5" r="1.6" fill="#0b1d3f"/></svg><svg class="a" style="left:12px;top:92px;" width="16" height="16" viewBox="0 0 16 16"><rect x="0" y="0" width="16" height="16" fill="#74b63b"/><path d="M0 3.5h5.5a7 7 0 0 1 7 7V16H9.5v-5.5a4 4 0 0 0-4-4H0z" fill="#fff"/><path d="M0 6.5h5.5a4 4 0 0 1 4 4V16H5V11H0z" fill="#74b63b"/><rect x="0" y="11" width="5" height="5" fill="#111"/></svg><div class="t" style="left:34px;top:93px;font-size:12px;line-height:15px;color:#454545">Privat</div><svg class="a" style="left:82px;top:93px;" width="12" height="14" viewBox="0 0 12 14"><path d="M.7 .7h10.6v9.5a5.3 3.6 0 0 1-10.6 0z" fill="#fff" stroke="#dc143c" stroke-width="1.2"/><path d="M6 2.5l1 1.2 2-.5-.8 2 1.3 1-1.8.8.3 2L6 8 4 9l.3-2-1.8-.8 1.3-1-.8-2 2 .5z" fill="#dc143c"/></svg><div class="t" style="left:102px;top:93px;font-size:12px;line-height:15px;color:#454545">Ministerstwo Nauki...</div><svg class="a" style="left:234px;top:92px;" width="16" height="16" viewBox="0 0 16 16"><path d="M1 5l3-3h6v4.5L15 3v10l-5-3.5V14H1z" fill="#00832d"/><path d="M4 2h6v4H1V5z" fill="#ea4335"/><path d="M1 6h3v5H1z" fill="#2684fc"/><path d="M1 11h9v3H1z" fill="#0066da"/><path d="M10 2v4.5L15 3z" fill="#ffba00" opacity=".0"/><path d="M4 2h6v2.5H4z" fill="#ffba00"/><rect x="4" y="6" width="6" height="5" fill="#fff"/><path d="M10 6.5L15 3v10l-5-3.5z" fill="#00ac47"/></svg><div class="t" style="left:256px;top:93px;font-size:12px;line-height:15px;color:#454545">Google Meet</div><svg class="a" style="left:342px;top:92px;" width="16" height="16" viewBox="0 0 16 16"><path d="M2 4l6-3 6 3-6 3z M2 7.5l6 3 6-3 M2 11l6 3 6-3" fill="none" stroke="#3b5bd9" stroke-width="1.6" stroke-linejoin="round"/></svg><div class="t" style="left:364px;top:93px;font-size:12px;line-height:15px;color:#454545">Wniosek - dane wni...</div><svg class="a" style="left:496px;top:92px;" width="16" height="16" viewBox="0 0 16 16"><rect width="16" height="13" fill="#0b4a2f"/><rect y="13" width="16" height="3" fill="#e2e81a"/><text x="8" y="9" font-size="6" font-weight="bold" fill="#e2e81a" text-anchor="middle" font-family="Liberation Sans">24/7</text></svg><div class="t" style="left:518px;top:93px;font-size:12px;line-height:15px;color:#454545">Веб-банк</div><svg class="a" style="left:586px;top:92px;" width="16" height="16" viewBox="0 0 16 16"><path d="M3 8a5.5 5.5 0 1 0 1.7-4" fill="none" stroke="#474747" stroke-width="1.5"/><path d="M2 2.5v4h4" fill="none" stroke="#474747" stroke-width="1.5"/><path d="M8.5 5v3.5l2.3 1.5" fill="none" stroke="#474747" stroke-width="1.4"/></svg><div class="t" style="left:607px;top:93px;font-size:12px;line-height:15px;color:#454545">Історія</div><svg class="a" style="left:661px;top:92px;" width="16" height="16" viewBox="0 0 16 16"><circle cx="8" cy="8" r="7" fill="#474747"/><path d="M4 3.5c2 .5 3 2 2 3.5S3 8 4 10s2 2.5 1.5 4M10 2.5c-.5 2 1 3 3 3.5M9.5 14c0-2 1-3 2.5-3.5s2 0 2.5-1" fill="none" stroke="#fff" stroke-width="1.5"/></svg><div class="t" style="left:682px;top:93px;font-size:12px;line-height:15px;color:#454545">Google</div><svg class="a" style="left:737px;top:91px;" width="17" height="17" viewBox="0 0 17 17"><path d="M1 16l3-8 4 2 4-2 4 8z" fill="#f4d03f"/><path d="M5 12l3-1.5 3 1.5" stroke="#6fb6d8" stroke-width="1" fill="none"/><circle cx="8.5" cy="5" r="3.5" fill="#fff" stroke="#56a6d6" stroke-width="1.5"/><path d="M8.5 8.5v3" stroke="#56a6d6" stroke-width="1.5"/></svg><div class="t" style="left:759px;top:93px;font-size:12px;line-height:15px;color:#454545">Програма U-LEAD</div><div class="t" style="left:874px;top:92px;font-size:13px;line-height:16px;color:#1e3d73;font-family:'Liberation Serif',serif;font-weight:bold;letter-spacing:1px">BA</div><div class="t" style="left:897px;top:93px;font-size:12px;line-height:15px;color:#454545">Cooperation</div><svg class="a" style="left:980px;top:93px;" width="14" height="14" viewBox="0 0 14 14"><path d="M13.2 7.2c0-.5 0-.9-.1-1.3H7v2.5h3.5a3 3 0 0 1-1.3 2l2 1.6c1.2-1.1 2-2.7 2-4.8z" fill="#4285f4"/><path d="M7 13.5c1.8 0 3.3-.6 4.3-1.6l-2-1.6c-.6.4-1.3.6-2.3.6-1.7 0-3.2-1.2-3.7-2.8L1.2 9.7A6.5 6.5 0 0 0 7 13.5z" fill="#34a853"/><path d="M3.3 8.1a3.9 3.9 0 0 1 0-2.4L1.2 4.1a6.5 6.5 0 0 0 0 5.8z" fill="#fbbc05"/><path d="M7 3c1 0 1.9.3 2.6 1l1.9-1.9A6.5 6.5 0 0 0 1.2 4.1l2.1 1.6C3.8 4.2 5.3 3 7 3z" fill="#ea4335"/></svg><div class="t" style="left:1001px;top:93px;font-size:12px;line-height:15px;color:#454545">przykład klasyfikacji...</div><svg class="a" style="left:1134px;top:93px;" width="14" height="14" viewBox="0 0 14 14"><path d="M13.2 7.2c0-.5 0-.9-.1-1.3H7v2.5h3.5a3 3 0 0 1-1.3 2l2 1.6c1.2-1.1 2-2.7 2-4.8z" fill="#4285f4"/><path d="M7 13.5c1.8 0 3.3-.6 4.3-1.6l-2-1.6c-.6.4-1.3.6-2.3.6-1.7 0-3.2-1.2-3.7-2.8L1.2 9.7A6.5 6.5 0 0 0 7 13.5z" fill="#34a853"/><path d="M3.3 8.1a3.9 3.9 0 0 1 0-2.4L1.2 4.1a6.5 6.5 0 0 0 0 5.8z" fill="#fbbc05"/><path d="M7 3c1 0 1.9.3 2.6 1l1.9-1.9A6.5 6.5 0 0 0 1.2 4.1l2.1 1.6C3.8 4.2 5.3 3 7 3z" fill="#ea4335"/></svg><div class="t" style="left:1155px;top:93px;font-size:12px;line-height:15px;color:#454545">Напрями ефективн...</div><svg class="a" style="left:1287px;top:92px;" width="16" height="16" viewBox="0 0 16 16"><rect x="5" y="4" width="11" height="12" fill="#dadce0"/><path d="M9 9l2.5-2 2.5 7M10 12h3" stroke="#777" stroke-width=".9" fill="none"/><path d="M1 0h10v13H1z" fill="#4a8af4"/><path d="M9 13l-2 3v-3z" fill="#3367d6"/><text x="6" y="9.5" font-size="7" font-weight="bold" fill="#fff" text-anchor="middle" font-family="Liberation Sans">G</text></svg><div class="t" style="left:1309px;top:93px;font-size:12px;line-height:15px;color:#454545">Google Translate</div><svg class="a" style="left:1447px;top:93px;" width="14" height="14" viewBox="0 0 14 14"><path d="M2 3l4 4-4 4M7 3l4 4-4 4" fill="none" stroke="#474747" stroke-width="1.5"/></svg><div class="a" style="left:1477px;top:91px;width:1px;height:17px;background:#a8c7fa"></div><svg class="a" style="left:1493px;top:92px;" width="18" height="16" viewBox="0 0 18 16"><path d="M1.5 2.5h5l1.5 2h8.5v9.5h-15z" fill="none" stroke="#474747" stroke-width="1.5" stroke-linejoin="round"/><path d="M1.5 6h15" stroke="#474747" stroke-width="1.2"/></svg><div class="t" style="left:1518px;top:93px;font-size:12px;line-height:15px;color:#454545">Усі закладки</div><div class="a" style="left:16px;top:137px;width:36px;height:40px;border-radius:8px;background:#fbbc04"></div><svg class="a" style="left:25px;top:147px;" width="18" height="18" viewBox="0 0 18 18"><path d="M1.3 1.3L14.5 14.9H1.3z" fill="#202124"/><g fill="#fbbc04"><rect x="2.2" y="4.9" width="2.2" height="2.3"/><rect x="2.2" y="8.9" width="2.2" height="2"/><rect x="5.8" y="8.9" width="2.2" height="2"/><rect x="2.2" y="12.2" width="2.2" height="2"/><rect x="5.8" y="12.2" width="2.2" height="2"/><path d="M9.3 12.2h1.6l1.9 2H9.3z"/></g><path d="M4.4 1.2h4.7v3.9h8.4v9" fill="none" stroke="#202124" stroke-width="1.5"/><circle cx="13.3" cy="8.2" r="1" fill="#202124"/><path d="M.5 .8L17 17.2" stroke="#fbbc04" stroke-width="3.2"/><path d="M.5 .8L17 17.2" stroke="#202124" stroke-width="1.7"/></svg><div class="a" style="left:68px;top:137px;width:1516px;height:40px;border-radius:8px;background:#3c4043"></div><div class="a" style="left:84px;top:145px;width:24px;height:24px;border-radius:12px;background:radial-gradient(circle at 50% 85%,#23324a 0,#23324a 30%,transparent 31%),radial-gradient(circle at 50% 45%,#b08a70 0,#b08a70 18%,transparent 19%),linear-gradient(#dfe3e6,#c9ced3)"></div><div class="t" style="left:124px;top:149px;font-size:14px;line-height:17px;font-weight:bold;color:#e8eaed">Юрій Стефанчук (Презентація)</div><div class="a" style="left:16px;top:235px;width:1144px;height:503px;border-radius:8px;background:#35373a;overflow:hidden"><div class="a" style="left:0;top:0;width:1144px;height:42px;background:#333639;box-shadow:0 1px 2px rgba(0,0,0,.45)"></div></div><svg class="a" style="left:32px;top:250px;" width="14" height="12" viewBox="0 0 14 12"><path d="M1 2h12M1 6h12M1 10h12" stroke="#dadce0" stroke-width="1.5"/></svg><div class="t" style="left:62px;top:250px;font-size:9.8px;line-height:13px;font-weight:bold;color:#f1f3f4">Фінансова стійкість громад</div><div class="a" style="left:485px;top:248px;width:18px;height:16px;background:#191b1c"></div><div class="t" style="left:485px;top:249px;width:18px;text-align:center;font-size:11px;line-height:14px;color:#f1f3f4">8</div><div class="t" style="left:506px;top:249px;font-size:10.5px;line-height:14px;color:#f1f3f4">/ 26</div><div class="a" style="left:539px;top:250px;width:1px;height:12px;background:#6b6e72"></div><div class="a" style="left:550px;top:255px;width:9px;height:1.5px;background:#e8eaed"></div><div class="a" style="left:570px;top:248px;width:32px;height:16px;background:#191b1c"></div><div class="t" style="left:570px;top:249px;width:32px;text-align:center;font-size:10.3px;line-height:14px;color:#f1f3f4">63%</div><svg class="a" style="left:611px;top:250px;" width="12" height="12" viewBox="0 0 12 12"><path d="M6 1v10M1 6h10" stroke="#e8eaed" stroke-width="1.5"/></svg><div class="a" style="left:632px;top:250px;width:1px;height:12px;background:#6b6e72"></div><svg class="a" style="left:645px;top:248px;" width="16" height="16" viewBox="0 0 16 16"><rect x="1.5" y="2.5" width="13" height="11" fill="none" stroke="#e8eaed" stroke-width="1.4"/><path d="M8 4.5l-2 2h4zM8 11.5l-2-2h4z" fill="#e8eaed"/></svg><svg class="a" style="left:669px;top:248px;" width="16" height="16" viewBox="0 0 16 16"><path d="M6 3a5.5 5.5 0 1 1-2.5 9" fill="none" stroke="#e8eaed" stroke-width="1.4"/><path d="M6 1v4H2z" fill="#e8eaed" opacity="0"/><path d="M5 5.5l3.5 3.5L5 12.5 1.5 9z" fill="none" stroke="#e8eaed" stroke-width="1.4"/><path d="M7.5 1.2v3.5H4" fill="none" stroke="#e8eaed" stroke-width="1.4"/></svg><svg class="a" style="left:1077px;top:251px;" width="11" height="11" viewBox="0 0 11 11"><path d="M5.5 0v7M2.5 4l3 3 3-3M1 7.5v2h9v-2" fill="none" stroke="#e8eaed" stroke-width="1.2"/></svg><svg class="a" style="left:1103px;top:250px;" width="13" height="12" viewBox="0 0 13 12"><rect x="3" y="0" width="7" height="2.5" fill="#e8eaed"/><rect x="0" y="3.5" width="13" height="5.5" rx="1.5" fill="#e8eaed"/><rect x="3" y="6.5" width="7" height="5.5" fill="#e8eaed"/><rect x="4.3" y="7.5" width="4.4" height="2" fill="#333639"/></svg><svg class="a" style="left:1132px;top:250px;" width="8" height="12" viewBox="0 0 8 12"><circle cx="4" cy="2.5" r="1.1" fill="#e8eaed"/><circle cx="4" cy="6" r="1.1" fill="#e8eaed"/><circle cx="4" cy="9.7" r="1.1" fill="#e8eaed"/></svg><div class="a" style="left:69px;top:285px;width:104px;height:59px;background:#a9abae;overflow:hidden"><svg class="a" style="left:0;top:0" width="104" height="59"><path d="M0 0h8L0 5z" fill="#44619a"/><path d="M10 0h8L0 13V8z" fill="#b5ac6c"/><path d="M104 59h-8l8-6z" fill="#b5ac6c"/><path d="M84 59l5-5 6 5z" fill="#44619a"/><circle cx="94" cy="6" r="2.5" fill="#5a7590"/><path d="M89 11h10M89 13h10" stroke="#8a9098" stroke-width=".8"/></svg><div class="a" style="left:27px;top:6px;width:50px;height:2.5px;background:#4b6183"></div><div class="a" style="left:44px;top:11px;width:16px;height:2.5px;background:#4b6183"></div><div class="a" style="left:3px;top:19px;width:20px;height:4px;border-radius:2px;background:#4b6183"></div><div class="a" style="left:27px;top:19px;width:17px;height:4px;border-radius:2px;background:#4b6183"></div><div class="a" style="left:51px;top:19px;width:31px;height:4px;border-radius:2px;background:#4b6183"></div><div class="a" style="left:86px;top:19px;width:14px;height:4px;border-radius:2px;background:#4b6183"></div><svg class="a" style="left:26px;top:30px" width="46" height="30"><path d="M2 10q3-6 10-5l3 4-1 8-4 3-7-2z" fill="#5eafc4"/><path d="M14 6q5-4 10-2l3 3 3-1v6l-6 2-4 7-3-1 2-5-5-1z" fill="#c8b458"/><path d="M27 7q4-2 9-1l7 3 1 6-3 4-5 3 1 4-4 2-3-3 1-4-5-1 2-6z" fill="#a83a3e"/></svg></div><div class="t" style="left:100px;top:351px;width:40px;text-align:center;font-size:11.5px;line-height:15px;color:#f1f3f4">4</div><div class="a" style="left:69px;top:379px;width:104px;height:59px;background:#a9abae;overflow:hidden"><svg class="a" style="left:0;top:0" width="104" height="59"><path d="M0 0h8L0 5z" fill="#44619a"/><path d="M10 0h8L0 13V8z" fill="#b5ac6c"/><path d="M104 59h-8l8-6z" fill="#b5ac6c"/><path d="M84 59l5-5 6 5z" fill="#44619a"/><circle cx="94" cy="6" r="2.5" fill="#5a7590"/><path d="M89 11h10M89 13h10" stroke="#8a9098" stroke-width=".8"/></svg><div class="a" style="left:37px;top:6px;width:30px;height:2.5px;background:#4b6183"></div><div class="a" style="left:7px;top:14px;width:70px;height:1.2px;background:#959aa2"></div><div class="a" style="left:7px;top:19px;width:88px;height:1.2px;background:#959aa2"></div><div class="a" style="left:7px;top:24px;width:70px;height:1.2px;background:#959aa2"></div><div class="a" style="left:7px;top:29px;width:88px;height:1.2px;background:#959aa2"></div><div class="a" style="left:7px;top:34px;width:70px;height:1.2px;background:#959aa2"></div><div class="a" style="left:5px;top:47px;width:18px;height:1.6px;background:#4b6183"></div><div class="a" style="left:5px;top:50px;width:90px;height:1.2px;background:#7f8896"></div><div class="a" style="left:5px;top:52.5px;width:50px;height:1.2px;background:#7f8896"></div></div><div class="t" style="left:100px;top:445px;width:40px;text-align:center;font-size:11.5px;line-height:15px;color:#f1f3f4">5</div><div class="a" style="left:69px;top:474px;width:104px;height:59px;background:#a9abae;overflow:hidden"><svg class="a" style="left:0;top:0" width="104" height="59"><path d="M0 0h8L0 5z" fill="#44619a"/><path d="M10 0h8L0 13V8z" fill="#b5ac6c"/><path d="M104 59h-8l8-6z" fill="#b5ac6c"/><path d="M84 59l5-5 6 5z" fill="#44619a"/><circle cx="94" cy="6" r="2.5" fill="#5a7590"/><path d="M89 11h10M89 13h10" stroke="#8a9098" stroke-width=".8"/></svg><div class="a" style="left:35px;top:6px;width:34px;height:2.5px;background:#4b6183"></div><div class="a" style="left:7px;top:14px;width:70px;height:1.2px;background:#959aa2"></div><div class="a" style="left:7px;top:19px;width:88px;height:1.2px;background:#959aa2"></div><div class="a" style="left:7px;top:24px;width:70px;height:1.2px;background:#959aa2"></div><div class="a" style="left:7px;top:29px;width:88px;height:1.2px;background:#959aa2"></div><div class="a" style="left:7px;top:34px;width:70px;height:1.2px;background:#959aa2"></div><div class="a" style="left:5px;top:47px;width:18px;height:1.6px;background:#4b6183"></div><div class="a" style="left:5px;top:50px;width:90px;height:1.2px;background:#7f8896"></div><div class="a" style="left:5px;top:52.5px;width:50px;height:1.2px;background:#7f8896"></div></div><div class="t" style="left:100px;top:540px;width:40px;text-align:center;font-size:11.5px;line-height:15px;color:#f1f3f4">6</div><div class="a" style="left:69px;top:568px;width:104px;height:59px;background:#a9abae;overflow:hidden"><svg class="a" style="left:0;top:0" width="104" height="59"><path d="M0 0h8L0 5z" fill="#44619a"/><path d="M10 0h8L0 13V8z" fill="#b5ac6c"/><path d="M104 59h-8l8-6z" fill="#b5ac6c"/><path d="M84 59l5-5 6 5z" fill="#44619a"/><circle cx="94" cy="6" r="2.5" fill="#5a7590"/><path d="M89 11h10M89 13h10" stroke="#8a9098" stroke-width=".8"/></svg><div class="a" style="left:40px;top:6px;width:24px;height:2.5px;background:#4b6183"></div><div class="a" style="left:7px;top:14px;width:70px;height:1.2px;background:#959aa2"></div><div class="a" style="left:7px;top:19px;width:88px;height:1.2px;background:#959aa2"></div><div class="a" style="left:7px;top:24px;width:70px;height:1.2px;background:#959aa2"></div><div class="a" style="left:7px;top:29px;width:88px;height:1.2px;background:#959aa2"></div><div class="a" style="left:7px;top:34px;width:70px;height:1.2px;background:#959aa2"></div><div class="a" style="left:5px;top:47px;width:18px;height:1.6px;background:#4b6183"></div><div class="a" style="left:5px;top:50px;width:90px;height:1.2px;background:#7f8896"></div><div class="a" style="left:5px;top:52.5px;width:50px;height:1.2px;background:#7f8896"></div></div><div class="t" style="left:100px;top:635px;width:40px;text-align:center;font-size:11.5px;line-height:15px;color:#f1f3f4">7</div><div class="a" style="left:64px;top:658px;width:114px;height:68px;background:#8ab4f8"></div><div class="a" style="left:69px;top:663px;width:104px;height:58px;background:#fff;overflow:hidden"><svg class="a" style="left:0;top:0" width="104" height="58"><path d="M0 0h8L0 5z" fill="#2f5aa8"/><path d="M10 0h9L0 14V8z" fill="#f2d750"/><path d="M104 58h-8l8-6z" fill="#f2d750"/><path d="M84 58l5-5 6 5z" fill="#2f5aa8"/><circle cx="94" cy="6" r="2.5" fill="#2f6a9a"/><path d="M89 11h10M89 13h10" stroke="#8a9098" stroke-width=".8"/></svg><div class="a" style="left:28px;top:5px;width:50px;height:2.8px;background:#2b4f80"></div><div class="a" style="left:38px;top:11px;width:28px;height:2.8px;background:#2b4f80"></div><div class="a" style="left:10px;top:19px;width:85px;height:1.2px;background:#8fa0b8"></div><div class="a" style="left:10px;top:21.5px;width:85px;height:1.2px;background:#8fa0b8"></div><div class="a" style="left:10px;top:24px;width:20px;height:1.2px;background:#8fa0b8"></div><div class="a" style="left:10px;top:30px;width:85px;height:1.2px;background:#8fa0b8"></div><div class="a" style="left:10px;top:32.5px;width:14px;height:1.2px;background:#8fa0b8"></div><div class="a" style="left:10px;top:38px;width:72px;height:1.2px;background:#8fa0b8"></div><div class="a" style="left:8px;top:48px;width:20px;height:1.6px;background:#2b4f80"></div><div class="a" style="left:8px;top:51px;width:88px;height:1.2px;background:#5a7299"></div><div class="a" style="left:8px;top:53.5px;width:52px;height:1.2px;background:#5a7299"></div></div><div class="a" style="left:16px;top:728px;width:210px;height:10px;overflow:hidden"><div class="t" style="left:84px;top:1px;width:40px;text-align:center;font-size:11.5px;line-height:15px;color:#f1f3f4">8</div></div><div class="a" style="left:226px;top:277px;width:934px;height:461px;background:#fff;overflow:hidden;border-radius:0 0 8px 0"><div class="a" style="left:0;top:0;width:13px;height:461px;background:#f0f0f0"></div><div class="a" style="left:1px;top:53px;width:10px;height:65px;background:#c1c1c1"></div><svg class="a" style="left:2px;top:4px" width="9" height="6"><path d="M1 5l3.5-4 3.5 4z" fill="#505050"/></svg><svg class="a" style="left:2px;top:451px" width="9" height="6"><path d="M1 1l3.5 4 3.5-4z" fill="#505050"/></svg><div class="a" style="left:13px;top:0;width:2px;height:461px;background:#3a3a3a"></div><div class="a" style="left:920px;top:0;width:2px;height:461px;background:#3a3a3a"></div><div class="a" style="left:922px;top:0;width:12px;height:461px;background:#f0f0f0"></div><div class="a" style="left:923px;top:131px;width:10px;height:16px;background:#c1c1c1"></div><svg class="a" style="left:923px;top:4px" width="9" height="6"><path d="M1 5l3.5-4 3.5 4z" fill="#505050"/></svg><svg class="a" style="left:923px;top:451px" width="9" height="6"><path d="M1 1l3.5 4 3.5-4z" fill="#505050"/></svg><svg class="a" style="left:0;top:0" width="934" height="461"><path d="M15 0h13L15 10z" fill="#2f5aa8"/><path d="M58 0h75L15 93V33z" fill="#f2d750"/><path d="M802 461L835 435Q839.5 431 844 435L866 461z" fill="#2f5aa8"/><path d="M866 461l54-43v43z" fill="#f2d750"/></svg></div><div class="t" style="left:443px;top:279px;font-size:39px;line-height:44px;font-weight:bold;color:#1f4b7d;-webkit-text-stroke:1.8px #1f4b7d;letter-spacing:3px;transform:scaleX(.72);transform-origin:0 0">ЗРОСТАННЯ КІЛЬКОСТІ ОСІБ З</div><div class="t" style="left:566px;top:335px;font-size:39px;line-height:44px;font-weight:bold;color:#1f4b7d;-webkit-text-stroke:1.8px #1f4b7d;letter-spacing:3.5px;transform:scaleX(.72);transform-origin:0 0">ІНВАЛІДНІСТЮ</div><div class="a" style="left:1058px;top:277px;width:56px;height:20px;overflow:hidden"><svg class="a" style="left:0;top:-26px" width="56" height="46" viewBox="0 0 56 46"><circle cx="28" cy="22" r="23" fill="#fff" stroke="#2f6fb5" stroke-width="1.2"/><circle cx="28" cy="22" r="21" fill="#0b4f9c"/><path d="M4 34 Q16 26 28 38 Q40 26 52 34 L50 40 Q40 32 28 44 Q16 32 6 40z" fill="#fff" stroke="#2f6fb5" stroke-width=".8"/><path d="M10 26h3M15 26h3M38 26h3M43 26h3" stroke="#d8d040" stroke-width="1"/></svg></div><div class="t" style="left:1030px;top:302px;width:111px;text-align:center;font-size:7.6px;line-height:10.1px;font-weight:bold;color:#1a1a1a">АСОЦІАЦІЯ МІСТ УКРАЇНИ<br>Івано-Франківське<br>регіональне відділення</div><div class="a" style="left:286px;top:398px;width:6px;height:6px;border-radius:3px;background:#2a4b76"></div><div class="a" style="left:302px;top:391px;width:792px;font-size:19.6px;line-height:22.4px;color:#2a4b76;letter-spacing:.25px"><div style="text-align:justify;text-align-last:justify;height:22.4px">За два роки повномасштабного&nbsp; вторгення кількість людей з інвалідністю в Україні</div><div style="text-align:justify;text-align-last:justify;height:22.4px"><b style="color:#1b406f">зросла на 10%</b>: <b style="color:#1b406f">2,7 млн. осіб</b>. станом на початок 2022 року; <b style="color:#1b406f">понад 3 млн.</b> осіб.</div><div>сьогодні.</div></div><div class="a" style="left:286px;top:489px;width:6px;height:6px;border-radius:3px;background:#2a4b76"></div><div class="a" style="left:302px;top:482px;width:792px;font-size:19.6px;line-height:22.4px;color:#2a4b76;letter-spacing:.25px"><div style="text-align:justify;text-align-last:justify;height:22.4px">За підсумками 2023 року, за кошти державного бюджету забезпечено <b style="color:#1b406f">понад 12 тис</b>.</div><div>осіб;</div></div><div class="a" style="left:286px;top:556px;width:6px;height:6px;border-radius:3px;background:#2a4b76"></div><div class="t" style="left:302px;top:549px;font-size:19.6px;line-height:22.4px;color:#2a4b76;letter-spacing:.25px">Зростання частки соціальних видатків у структурі місцевих бюджетів;</div><div class="t" style="left:272px;top:642px;font-size:24px;line-height:28px;font-weight:bold;color:#1b3f6e;letter-spacing:-.8px">Наслідки для ОМС:</div><div class="t" style="left:272px;top:668px;font-size:24px;line-height:28px;color:#1f4677;letter-spacing:-.3px">зростання частки видатків на соціальне забезпечення; відсутність коштів для</div><div class="t" style="left:272px;top:692.5px;font-size:24px;line-height:28px;color:#1f4677;letter-spacing:-.5px">розвитку та співфінансування проєктів</div><div class="a" style="left:1177px;top:193px;width:198px;height:138px;border-radius:10px;background:#6f9ff2"></div><div class="a" style="left:1181px;top:197px;width:190px;height:130px;border-radius:7px;overflow:hidden"><svg width="190" height="130" viewBox="0 0 190 130"><defs><filter id="b1" x="-10%" y="-10%" width="120%" height="120%"><feGaussianBlur stdDeviation="1.2"/></filter><linearGradient id="g1" x1="0" x2="1"><stop offset="0" stop-color="#d3d8dc"/><stop offset=".5" stop-color="#e2e5e8"/><stop offset="1" stop-color="#dcdfe2"/></linearGradient></defs><rect width="190" height="130" fill="url(#g1)"/><g filter="url(#b1)"><rect x="160" y="5" width="32" height="130" fill="#cbb898"/><rect x="158" y="5" width="3" height="130" fill="#d8c8ae"/><rect x="48" y="74" width="84" height="12" rx="5" fill="#45474b"/><path d="M0 112 Q20 92 40 87 L70 80 L124 81 L160 93 Q182 104 190 112 V130 H0z" fill="#97a1a7"/><path d="M80 86 L98 128 L116 86 z" fill="#18191c"/><path d="M82 82 Q97 104 114 82 L114 96 Q97 108 82 96z" fill="#a87868"/><path d="M68 50 Q68 28 96 26 Q124 28 124 50 L123 70 Q120 92 106 100 Q96 104 86 100 Q72 92 69 70z" fill="#bf8e7b"/><ellipse cx="68" cy="64" rx="3.5" ry="8" fill="#b08070"/><ellipse cx="124" cy="64" rx="3.5" ry="8" fill="#b08070"/><path d="M66 56 Q62 20 96 20 Q128 21 124 54 Q121 40 112 36 Q96 32 80 36 Q70 40 66 56z" fill="#3a3430"/><path d="M80 57h11M102 57h11" stroke="#6a4a40" stroke-width="2.2"/><path d="M95 62 L92 76 Q96 79 100 76z" fill="#b38272"/><path d="M88 84q8 -3 16 0q-8 5 -16 0z" fill="#8a5a50"/></g></svg></div><div class="a" style="left:1337px;top:204px;width:26px;height:26px;border-radius:13px;background:#3584e4"></div><svg class="a" style="left:1341px;top:208px;" width="18" height="18" viewBox="0 0 18 18"><rect x="1.8" y="6.3" width="4" height="5.4" rx="2" fill="#fff"/><rect x="7.5" y="2.8" width="3.2" height="12.4" rx="1.6" fill="#fff"/><rect x="12.2" y="6.3" width="4" height="5.4" rx="2" fill="#fff"/></svg><div class="t" style="left:1193px;top:302px;font-size:13.7px;line-height:17px;font-weight:bold;color:#fff;text-shadow:0 0 2px rgba(0,0,0,.35)">Юрій Стефанчук</div><div class="a" style="left:1387px;top:193px;width:197px;height:138px;border-radius:8px;background:#3c4043"></div><div class="a" style="left:1456px;top:232px;width:60px;height:60px;border-radius:30px;background:#0097a7"></div><div class="t" style="left:1456px;top:244px;width:60px;text-align:center;font-size:32px;line-height:37px;color:#fff">M</div><div class="a" style="left:1546px;top:205px;width:26px;height:26px;border-radius:13px;background:rgba(32,33,36,.42);opacity:1"></div><svg class="a" style="left:1550px;top:209px;opacity:1" width="18" height="18" viewBox="0 0 24 24"><path d="M19 11h-1.7c0 .74-.16 1.43-.43 2.05l1.23 1.23c.56-.98.9-2.09.9-3.28zm-4.02.17c0-.06.02-.11.02-.17V5c0-1.66-1.34-3-3-3S9 3.34 9 5v.18l5.98 5.99zM4.27 3L3 4.27l6.01 6.01V11c0 1.66 1.33 3 2.99 3 .22 0 .44-.03.65-.08l1.66 1.66c-.71.33-1.5.52-2.31.52-2.76 0-5.3-2.1-5.3-5.1H5c0 3.41 2.72 6.23 6 6.72V21h2v-3.28c.91-.13 1.77-.45 2.54-.9L19.73 21 21 19.73 4.27 3z" fill="#fff"/></svg><div class="t" style="left:1403px;top:302px;font-size:13.7px;line-height:17px;font-weight:bold;color:#fff;text-shadow:0 0 2px rgba(0,0,0,.35)">Максим-Василь Стель...</div><div class="a" style="left:1177px;top:343px;width:198px;height:138px;border-radius:8px;background:#3c4043"></div><div class="a" style="left:1246px;top:382px;width:60px;height:60px;border-radius:30px;overflow:hidden"><svg width="60" height="60" viewBox="0 0 60 60"><defs><filter id="b3"><feGaussianBlur stdDeviation=".6"/></filter></defs><rect width="60" height="60" fill="#df9030"/><g filter="url(#b3)"><rect x="0" y="0" width="60" height="10" fill="#c88030"/><rect x="48" y="8" width="12" height="52" fill="#d8a060"/><path d="M22 36 L40 27 L58 38 V60 H28z" fill="#3a3230"/><path d="M42 40 L58 44 V60 H44z" fill="#a8a09a"/><ellipse cx="29" cy="28" rx="9" ry="11" fill="#d49a7a"/><path d="M20 25 Q21 14 31 15 Q38 16 38 24 Q33 19 22 26z" fill="#2d2522"/><ellipse cx="10" cy="37" rx="11" ry="10" fill="#3a3734" transform="rotate(-15 10 37)"/><path d="M25 50 L31 60" stroke="#222" stroke-width="1.5"/><path d="M16 46 V60" stroke="#222" stroke-width="1.5"/></g></svg></div><div class="a" style="left:1337px;top:355px;width:26px;height:26px;border-radius:13px;background:rgba(32,33,36,.42);opacity:1"></div><svg class="a" style="left:1341px;top:359px;opacity:1" width="18" height="18" viewBox="0 0 24 24"><path d="M19 11h-1.7c0 .74-.16 1.43-.43 2.05l1.23 1.23c.56-.98.9-2.09.9-3.28zm-4.02.17c0-.06.02-.11.02-.17V5c0-1.66-1.34-3-3-3S9 3.34 9 5v.18l5.98 5.99zM4.27 3L3 4.27l6.01 6.01V11c0 1.66 1.33 3 2.99 3 .22 0 .44-.03.65-.08l1.66 1.66c-.71.33-1.5.52-2.31.52-2.76 0-5.3-2.1-5.3-5.1H5c0 3.41 2.72 6.23 6 6.72V21h2v-3.28c.91-.13 1.77-.45 2.54-.9L19.73 21 21 19.73 4.27 3z" fill="#fff"/></svg><div class="t" style="left:1193px;top:452px;font-size:13.7px;line-height:17px;font-weight:bold;color:#fff;text-shadow:0 0 2px rgba(0,0,0,.35)">Володимир Радевич</div><div class="a" style="left:1387px;top:343px;width:197px;height:138px;border-radius:8px;background:#3c4043"></div><div class="a" style="left:1443px;top:343px;width:86px;height:138px;overflow:hidden"><svg width="86" height="138" viewBox="0 0 86 138"><defs><filter id="b4"><feGaussianBlur stdDeviation="1.3"/></filter><linearGradient id="g4" x1="0" x2="1"><stop offset="0" stop-color="#4e3426"/><stop offset="1" stop-color="#6e4e3a"/></linearGradient></defs><rect width="86" height="138" fill="url(#g4)"/><g filter="url(#b4)"><ellipse cx="74" cy="20" rx="5" ry="7" fill="#9a8660"/><path d="M0 78 Q16 72 28 76 L56 72 Q70 66 86 70 V138 H0z" fill="#a2aeb4"/><path d="M28 76 Q42 96 58 72 L60 84 Q42 104 26 86z" fill="#94a0a6"/><path d="M14 40 Q14 22 42 22 Q70 22 70 40 L69 62 Q66 84 52 90 Q42 94 32 90 Q18 84 15 62z" fill="#c8a290"/><path d="M16 60 Q18 84 32 90 Q42 94 52 90 Q66 84 68 60 Q64 78 54 80 Q42 74 30 80 Q20 78 16 60z" fill="#6a5046"/><path d="M8 44 Q2 6 36 0 Q76 -2 74 40 Q70 30 64 26 Q42 18 22 26 Q14 32 14 46z" fill="#3b2f28"/><path d="M23 47h12M50 47h12" stroke="#4a3a33" stroke-width="2.5"/><path d="M41 52 L38 66 Q42 69 46 66z" fill="#b8907e"/><path d="M36 75q6 -2 12 0" stroke="#8a5a50" stroke-width="2" fill="none"/></g></svg></div><div class="a" style="left:1546px;top:355px;width:26px;height:26px;border-radius:13px;background:rgba(32,33,36,.42);opacity:1"></div><svg class="a" style="left:1550px;top:359px;opacity:1" width="18" height="18" viewBox="0 0 24 24"><path d="M19 11h-1.7c0 .74-.16 1.43-.43 2.05l1.23 1.23c.56-.98.9-2.09.9-3.28zm-4.02.17c0-.06.02-.11.02-.17V5c0-1.66-1.34-3-3-3S9 3.34 9 5v.18l5.98 5.99zM4.27 3L3 4.27l6.01 6.01V11c0 1.66 1.33 3 2.99 3 .22 0 .44-.03.65-.08l1.66 1.66c-.71.33-1.5.52-2.31.52-2.76 0-5.3-2.1-5.3-5.1H5c0 3.41 2.72 6.23 6 6.72V21h2v-3.28c.91-.13 1.77-.45 2.54-.9L19.73 21 21 19.73 4.27 3z" fill="#fff"/></svg><div class="t" style="left:1403px;top:452px;font-size:13.7px;line-height:17px;font-weight:bold;color:#fff;text-shadow:0 0 2px rgba(0,0,0,.35)">Назар Яремчук</div><div class="a" style="left:1177px;top:493px;width:198px;height:138px;border-radius:8px;background:#3c4043"></div><div class="a" style="left:1246px;top:532px;width:60px;height:60px;border-radius:30px;overflow:hidden"><svg width="60" height="60" viewBox="0 0 60 60"><defs><filter id="b5"><feGaussianBlur stdDeviation=".7"/></filter><linearGradient id="g5" x1="0" x2="1"><stop offset="0" stop-color="#b06a38"/><stop offset=".2" stop-color="#d89868"/><stop offset=".35" stop-color="#9a5a30"/><stop offset=".5" stop-color="#e8b080"/><stop offset=".7" stop-color="#8a5030"/><stop offset=".85" stop-color="#c88050"/><stop offset="1" stop-color="#7a4528"/></linearGradient></defs><rect width="60" height="60" fill="url(#g5)"/><g filter="url(#b5)"><rect x="0" y="45" width="60" height="15" fill="#e6d6c6"/><path d="M24 30 Q31 26 38 30 L38 42 H24z" fill="#d49c84"/><path d="M20 36 Q30 38 36 34 L38 60 H18z" fill="#f2eeea"/><ellipse cx="32" cy="17" rx="6.5" ry="8.5" fill="#d8a48c"/><path d="M25 14 Q26 6 34 7 Q42 9 41 18 L46 40 Q48 52 42 60 L34 60 Q38 45 35 30 Q38 20 36 14 Q31 10 25 14z" fill="#3a2018"/></g></svg></div><div class="a" style="left:1337px;top:505px;width:26px;height:26px;border-radius:13px;background:rgba(32,33,36,.42);opacity:1"></div><svg class="a" style="left:1341px;top:509px;opacity:1" width="18" height="18" viewBox="0 0 24 24"><path d="M19 11h-1.7c0 .74-.16 1.43-.43 2.05l1.23 1.23c.56-.98.9-2.09.9-3.28zm-4.02.17c0-.06.02-.11.02-.17V5c0-1.66-1.34-3-3-3S9 3.34 9 5v.18l5.98 5.99zM4.27 3L3 4.27l6.01 6.01V11c0 1.66 1.33 3 2.99 3 .22 0 .44-.03.65-.08l1.66 1.66c-.71.33-1.5.52-2.31.52-2.76 0-5.3-2.1-5.3-5.1H5c0 3.41 2.72 6.23 6 6.72V21h2v-3.28c.91-.13 1.77-.45 2.54-.9L19.73 21 21 19.73 4.27 3z" fill="#fff"/></svg><div class="t" style="left:1193px;top:602px;font-size:13.7px;line-height:17px;font-weight:bold;color:#fff;text-shadow:0 0 2px rgba(0,0,0,.35)">Oksana Shunina</div><div class="a" style="left:1387px;top:493px;width:197px;height:138px;border-radius:8px;background:#3c4043"></div><div class="a" style="left:1456px;top:532px;width:60px;height:60px;border-radius:30px;background:#0097a7"></div><div class="t" style="left:1456px;top:544px;width:60px;text-align:center;font-size:32px;line-height:37px;color:#fff">T</div><div class="a" style="left:1546px;top:505px;width:26px;height:26px;border-radius:13px;background:rgba(32,33,36,.42);opacity:1"></div><svg class="a" style="left:1550px;top:509px;opacity:1" width="18" height="18" viewBox="0 0 24 24"><path d="M19 11h-1.7c0 .74-.16 1.43-.43 2.05l1.23 1.23c.56-.98.9-2.09.9-3.28zm-4.02.17c0-.06.02-.11.02-.17V5c0-1.66-1.34-3-3-3S9 3.34 9 5v.18l5.98 5.99zM4.27 3L3 4.27l6.01 6.01V11c0 1.66 1.33 3 2.99 3 .22 0 .44-.03.65-.08l1.66 1.66c-.71.33-1.5.52-2.31.52-2.76 0-5.3-2.1-5.3-5.1H5c0 3.41 2.72 6.23 6 6.72V21h2v-3.28c.91-.13 1.77-.45 2.54-.9L19.73 21 21 19.73 4.27 3z" fill="#fff"/></svg><div class="t" style="left:1403px;top:602px;font-size:13.7px;line-height:17px;font-weight:bold;color:#fff;text-shadow:0 0 2px rgba(0,0,0,.35)">Тетяна Буртник</div><div class="a" style="left:1177px;top:643px;width:198px;height:138px;border-radius:8px;background:#3c4043"></div><div class="a" style="left:1233px;top:643px;width:85px;height:138px;overflow:hidden"><svg width="85" height="138" viewBox="0 0 85 138"><defs><filter id="b7"><feGaussianBlur stdDeviation="1"/></filter></defs><rect width="85" height="138" fill="#dd8a55"/><g filter="url(#b7)"><rect x="60" y="0" width="25" height="42" fill="#e6c8ca"/><rect x="62" y="40" width="23" height="26" fill="#a4ccd2"/><rect x="0" y="0" width="3" height="80" fill="#c8b0a0"/><rect x="22" y="0" width="2" height="70" fill="#c87a48"/><rect x="57" y="0" width="3" height="45" fill="#b8a8a0"/><path d="M0 72 Q20 62 40 68 Q60 62 85 72 V138 H0z" fill="#9aa2aa"/><path d="M0 84 L12 80 L16 100 L4 106 L0 104z" fill="#e86860"/><path d="M66 84 L85 78 V138 H70z" fill="#ea6a62"/><circle cx="76" cy="96" r="3" fill="#f0d0d0"/><circle cx="78" cy="116" r="3" fill="#f0d0d0"/><path d="M24 40 Q22 16 44 17 Q64 18 63 42 L64 120 Q44 130 24 122z" fill="#8a6850"/><path d="M36 84h16v44H36z" fill="#7aa6cc"/><ellipse cx="45" cy="46" rx="15" ry="20" fill="#e8b8a4"/><path d="M37 42h6M49 42h6" stroke="#8a6a60" stroke-width="1.5"/><path d="M50 70 Q54 54 62 54 Q70 56 68 72 L72 138 H56 L54 80z" fill="#e4b09c"/></g></svg></div><div class="t" style="left:1193px;top:751px;font-size:13.7px;line-height:17px;font-weight:bold;color:#fff;text-shadow:0 0 2px rgba(0,0,0,.35)">Ірина Дутка</div><div class="a" style="left:1387px;top:643px;width:197px;height:138px;border-radius:8px;background:#3c4043"></div><div class="a" style="left:1334px;top:632px;width:234px;height:132px;border-radius:8px;overflow:hidden"><svg width="234" height="132" viewBox="0 0 234 132"><defs><filter id="b8"><feGaussianBlur stdDeviation="1"/></filter><linearGradient id="g8" x1="0" x2="1"><stop offset="0" stop-color="#c4c4c0"/><stop offset=".5" stop-color="#d2d2d0"/><stop offset=".8" stop-color="#e0e0de"/><stop offset="1" stop-color="#cfcfcd"/></linearGradient></defs><rect width="234" height="132" fill="url(#g8)"/><g filter="url(#b8)"><rect x="0" y="0" width="58" height="132" fill="#90b878"/><rect x="0" y="0" width="22" height="80" fill="#6a9850"/><rect x="7" y="0" width="6" height="105" fill="#6e7060"/><rect x="0" y="100" width="58" height="32" fill="#88c068"/><rect x="30" y="0" width="14" height="90" fill="#a8c098"/><rect x="33" y="5" width="6" height="95" fill="#707868"/><rect x="21" y="0" width="5" height="132" fill="#2e302e"/><rect x="46" y="0" width="13" height="132" fill="#b08860"/><rect x="52" y="14" width="7" height="118" fill="#c8a272"/><path d="M26 120 L58 104 V132 H26z" fill="#5a4a3a"/><path d="M26 0 H234 V15 H26z" fill="#6a5038"/><path d="M172 15 L196 0 L234 0 V15z" fill="#c0a078"/><path d="M175 15 L200 15 L234 44 V60z" fill="#f4f4f2"/><rect x="200" y="107" width="34" height="25" fill="#6a4e3a"/><rect x="200" y="113" width="34" height="2" fill="#3a3a3a"/><circle cx="218" cy="94" r="11" fill="none" stroke="#2a2a2a" stroke-width="1.4"/><path d="M210 88l12 12M214 86l8 10M207 92h6" stroke="#3a3a3a" stroke-width="1"/><rect x="180" y="91" width="28" height="19" rx="2" fill="#b8b8b4"/><path d="M168 132 L200 110 L234 122 V132z" fill="#8e8e8a"/><path d="M88 62 Q82 8 114 4 Q146 2 148 40 Q150 60 144 70 L90 70z" fill="#3b2a30"/><path d="M104 58 H138 V84 H104z" fill="#c8887a"/><ellipse cx="121" cy="47" rx="21" ry="27" fill="#d4937f"/><path d="M98 34 Q104 14 124 14 Q142 16 144 34 Q134 22 118 24 Q104 26 98 34z" fill="#3b2a30"/><ellipse cx="110" cy="38" rx="8" ry="5" fill="#7a7ae8" fill-opacity=".45" stroke="#5a5060" stroke-width="1.3"/><ellipse cx="132" cy="38" rx="8" ry="5" fill="#7a7ae8" fill-opacity=".45" stroke="#5a5060" stroke-width="1.3"/><path d="M113 60q8 2 15 0" stroke="#8a5050" stroke-width="2" fill="none"/><path d="M44 132 Q48 86 72 78 L100 70 Q120 80 142 70 L164 78 Q196 92 206 132z" fill="#ec9b4d"/></g></svg></div><div class="a" style="left:1530px;top:645px;width:26px;height:26px;border-radius:13px;background:rgba(32,33,36,.42);opacity:0.55"></div><svg class="a" style="left:1534px;top:649px;opacity:0.55" width="18" height="18" viewBox="0 0 24 24"><path d="M19 11h-1.7c0 .74-.16 1.43-.43 2.05l1.23 1.23c.56-.98.9-2.09.9-3.28zm-4.02.17c0-.06.02-.11.02-.17V5c0-1.66-1.34-3-3-3S9 3.34 9 5v.18l5.98 5.99zM4.27 3L3 4.27l6.01 6.01V11c0 1.66 1.33 3 2.99 3 .22 0 .44-.03.65-.08l1.66 1.66c-.71.33-1.5.52-2.31.52-2.76 0-5.3-2.1-5.3-5.1H5c0 3.41 2.72 6.23 6 6.72V21h2v-3.28c.91-.13 1.77-.45 2.54-.9L19.73 21 21 19.73 4.27 3z" fill="#fff"/></svg><div class="t" style="left:1350px;top:735px;font-size:13.7px;line-height:17px;font-weight:bold;color:#fff;text-shadow:0 0 2px rgba(0,0,0,.35)">Леся Вербовська</div><div class="t" style="left:24px;top:810px;font-size:16px;line-height:20px;font-weight:bold;color:#fff">08:27</div><div class="a" style="left:78px;top:812px;width:1px;height:16px;background:#e8eaed"></div><div class="t" style="left:91px;top:810px;font-size:16px;line-height:20px;font-weight:bold;color:#fff">Лекції</div><div class="a" style="left:518px;top:796px;width:72px;height:48px;border-radius:16px 0 0 16px;background:#601410"></div><div class="a" style="left:558px;top:796px;width:48px;height:48px;border-radius:16px;background:#f9dedc"></div><svg class="a" style="left:534px;top:814px;" width="14" height="10" viewBox="0 0 14 10"><path d="M2.5 7.5L7 3l4.5 4.5" fill="none" stroke="#f9dedc" stroke-width="2"/></svg><svg class="a" style="left:570px;top:808px;" width="24" height="24" viewBox="0 0 24 24"><path d="M19 11h-1.7c0 .74-.16 1.43-.43 2.05l1.23 1.23c.56-.98.9-2.09.9-3.28zm-4.02.17c0-.06.02-.11.02-.17V5c0-1.66-1.34-3-3-3S9 3.34 9 5v.18l5.98 5.99zM4.27 3L3 4.27l6.01 6.01V11c0 1.66 1.33 3 2.99 3 .22 0 .44-.03.65-.08l1.66 1.66c-.71.33-1.5.52-2.31.52-2.76 0-5.3-2.1-5.3-5.1H5c0 3.41 2.72 6.23 6 6.72V21h2v-3.28c.91-.13 1.77-.45 2.54-.9L19.73 21 21 19.73 4.27 3z" fill="#601410"/></svg><div class="a" style="left:614px;top:796px;width:88px;height:48px;border-radius:24px;background:#2b2c2f"></div><div class="a" style="left:654px;top:796px;width:48px;height:48px;border-radius:24px;background:#333538"></div><svg class="a" style="left:630px;top:814px;" width="14" height="10" viewBox="0 0 14 10"><path d="M2.5 7.5L7 3l4.5 4.5" fill="none" stroke="#80868b" stroke-width="1.8"/></svg><svg class="a" style="left:666px;top:808px;" width="24" height="24" viewBox="0 0 24 24"><path d="M15 8v8H5V8h10m1-2H4c-.55 0-1 .45-1 1v10c0 .55.45 1 1 1h12c.55 0 1-.45 1-1v-3.5l4 4v-11l-4 4V7c0-.55-.45-1-1-1z" fill="#e3e3e3"/></svg><div class="a" style="left:710px;top:796px;width:56px;height:48px;border-radius:24px;background:#333538"></div><div class="a" style="left:774px;top:796px;width:56px;height:48px;border-radius:24px;background:#333538"></div><div class="a" style="left:838px;top:796px;width:56px;height:48px;border-radius:24px;background:#333538"></div><div class="a" style="left:902px;top:796px;width:56px;height:48px;border-radius:24px;background:#333538"></div><svg class="a" style="left:726px;top:808px;" width="24" height="24" viewBox="0 0 24 24"><path d="M19 4H5c-1.11 0-2 .9-2 2v12c0 1.1.89 2 2 2h14c1.1 0 2-.9 2-2V6c0-1.1-.9-2-2-2zm0 14H5V6h14v12zM7 15h3c.55 0 1-.45 1-1v-1H9.5v.5h-2v-3h2v.5H11v-1c0-.55-.45-1-1-1H7c-.55 0-1 .45-1 1v4c0 .55.45 1 1 1zm7 0h3c.55 0 1-.45 1-1v-1h-1.5v.5h-2v-3h2v.5H18v-1c0-.55-.45-1-1-1h-3c-.55 0-1 .45-1 1v4c0 .55.45 1 1 1z" fill="#e3e3e3"/></svg><svg class="a" style="left:790px;top:808px;" width="24" height="24" viewBox="0 0 24 24"><path d="M11.99 2C6.47 2 2 6.48 2 12s4.47 10 9.99 10C17.52 22 22 17.52 22 12S17.52 2 11.99 2zM12 20c-4.42 0-8-3.58-8-8s3.58-8 8-8 8 3.58 8 8-3.58 8-8 8zm3.5-9c.83 0 1.5-.67 1.5-1.5S16.33 8 15.5 8 14 8.67 14 9.5s.67 1.5 1.5 1.5zm-7 0c.83 0 1.5-.67 1.5-1.5S9.33 8 8.5 8 7 8.67 7 9.5 7.67 11 8.5 11zm3.5 6.5c2.33 0 4.31-1.46 5.11-3.5H6.89c.8 2.04 2.78 3.5 5.11 3.5z" fill="#e3e3e3"/></svg><svg class="a" style="left:854px;top:808px;" width="24" height="24" viewBox="0 0 24 24"><path d="M21 3H3c-1.11 0-2 .89-2 2v14c0 1.11.89 2 2 2h18c1.11 0 2-.89 2-2V5c0-1.11-.89-2-2-2zm0 16.02H3V4.98h18v14.04zM10 12H8l4-4 4 4h-2v4h-4v-4z" fill="#e3e3e3"/></svg><svg class="a" style="left:916px;top:806px;" width="27" height="29" viewBox="0 0 24 26"><path d="M8 12V5.5a1.3 1.3 0 0 1 2.6 0V11M10.6 10V3.8a1.3 1.3 0 0 1 2.6 0V11M13.2 10.5V4.8a1.3 1.3 0 0 1 2.6 0V11.5M15.8 11V7a1.3 1.3 0 0 1 2.6 0v7.5c0 4.5-3 7.5-6.5 7.5-2.8 0-4.3-1.5-5.5-3.5L4 14.5c-.6-1 .8-2.2 1.8-1.3L8 15" fill="none" stroke="#e3e3e3" stroke-width="1.6" stroke-linejoin="round"/></svg><div class="a" style="left:966px;top:796px;width:36px;height:48px;border-radius:18px;background:#333538"></div><svg class="a" style="left:972px;top:808px;" width="24" height="24" viewBox="0 0 24 24"><circle cx="12" cy="6" r="2" fill="#e3e3e3"/><circle cx="12" cy="12" r="2" fill="#e3e3e3"/><circle cx="12" cy="18" r="2" fill="#e3e3e3"/></svg><div class="a" style="left:1010px;top:796px;width:72px;height:48px;border-radius:24px;background:#dc362e"></div><svg class="a" style="left:1034px;top:808px;" width="24" height="24" viewBox="0 0 24 24"><path d="M12 9c-1.6 0-3.15.25-4.6.72v3.1c0 .39-.23.74-.56.9-.98.49-1.87 1.12-2.66 1.85-.18.18-.43.28-.7.28-.28 0-.53-.11-.71-.29L.29 13.08c-.18-.17-.29-.42-.29-.7 0-.28.11-.53.29-.71C3.34 8.78 7.46 7 12 7s8.66 1.78 11.71 4.67c.18.18.29.43.29.71 0 .28-.11.53-.29.71l-2.48 2.48c-.18.18-.43.29-.71.29-.27 0-.52-.11-.7-.28-.79-.74-1.69-1.36-2.67-1.85-.33-.16-.56-.5-.56-.9v-3.1C15.15 9.25 13.6 9 12 9z" fill="#fff"/></svg><svg class="a" style="left:1360px;top:808px;" width="24" height="24" viewBox="0 0 24 24"><path d="M11 7h2v2h-2zm0 4h2v6h-2zm1-9C6.48 2 2 6.48 2 12s4.48 10 10 10 10-4.48 10-10S17.52 2 12 2zm0 18c-4.41 0-8-3.59-8-8s3.59-8 8-8 8 3.59 8 8-3.59 8-8 8z" fill="#fff"/></svg><div class="a" style="left:1421px;top:787px;width:26px;height:20px;border-radius:10px;background:#5f6368"></div><div class="t" style="left:1421px;top:790px;width:26px;text-align:center;font-size:11.5px;line-height:14px;font-weight:bold;color:#fff">19</div><svg class="a" style="left:1408px;top:808px;" width="24" height="24" viewBox="0 0 24 24"><path d="M16.67 13.13C18.04 14.06 19 15.32 19 17v3h4v-3c0-2.18-3.57-3.47-6.33-3.87zM15 12c2.21 0 4-1.79 4-4s-1.79-4-4-4c-.47 0-.91.1-1.33.24a5.98 5.98 0 0 1 0 7.52c.42.14.86.24 1.33.24zm-6 0c2.21 0 4-1.79 4-4s-1.79-4-4-4-4 1.79-4 4 1.79 4 4 4zm0-6c1.1 0 2 .9 2 2s-.9 2-2 2-2-.9-2-2 .9-2 2-2zm0 7c-2.67 0-8 1.34-8 4v3h16v-3c0-2.66-5.33-4-8-4zm6 5H3v-.99C3.2 16.29 6.3 15 9 15s5.8 1.29 6 2v1z" fill="#fff"/></svg><svg class="a" style="left:1456px;top:808px;" width="24" height="24" viewBox="0 0 24 24"><path d="M4 4h16v12H5.17L4 17.17V4m0-2c-1.1 0-1.99.9-1.99 2L2 22l4-4h14c1.1 0 2-.9 2-2V4c0-1.1-.9-2-2-2H4zm2 10h8v2H6v-2zm0-3h12v2H6V9zm0-3h12v2H6V6z" fill="#fff"/></svg><svg class="a" style="left:1504px;top:808px;" width="24" height="24" viewBox="0 0 24 24"><path d="M12 2l-5.5 9h11L12 2zm0 3.84L13.93 9h-3.87L12 5.84zM17.5 13c-2.49 0-4.5 2.01-4.5 4.5s2.01 4.5 4.5 4.5 4.5-2.01 4.5-4.5-2.01-4.5-4.5-4.5zm0 7c-1.38 0-2.5-1.12-2.5-2.5s1.12-2.5 2.5-2.5 2.5 1.12 2.5 2.5-1.12 2.5-2.5 2.5zM3 21.5h8v-8H3v8zm2-6h4v4H5v-4z" fill="#fff"/></svg><svg class="a" style="left:1552px;top:808px;" width="24" height="24" viewBox="0 0 24 24"><path d="M12.5 9.5H4.5v11h6" fill="none" stroke="#fff" stroke-width="2"/><path d="M7.5 9.5V6.2a4 4 0 0 1 8 0v4" fill="none" stroke="#fff" stroke-width="2"/><circle cx="17.5" cy="17" r="4.8" fill="#fff"/><rect x="16.6" y="16.5" width="1.8" height="3.4" fill="#202124"/><circle cx="17.5" cy="14.8" r="1" fill="#202124"/></svg><div class="a" style="left:0;top:860px;width:1600px;height:40px;background:linear-gradient(90deg,#213c47 0%,#223644 45%,#1b2845 100%)"></div><svg class="a" style="left:16px;top:872px;" width="16" height="16" viewBox="0 0 16 16"><path d="M0 2.3l6.5-.9v6.1H0zM7.3 1.3L16 0v7.5H7.3zM0 8.4h6.5v6.2L0 13.7zM7.3 8.4H16V16l-8.7-1.2z" fill="#fff"/></svg><div class="a" style="left:149px;top:860px;width:48px;height:40px;background:rgba(255,255,255,.12)"></div><div class="a" style="left:198px;top:860px;width:48px;height:40px;background:rgba(255,255,255,.08)"></div><div class="a" style="left:104px;top:898px;width:40px;height:2px;background:#76b9ed"></div><div class="a" style="left:149px;top:898px;width:48px;height:2px;background:#76b9ed"></div><div class="a" style="left:251px;top:898px;width:40px;height:2px;background:#76b9ed"></div><div class="a" style="left:300px;top:898px;width:40px;height:2px;background:#76b9ed"></div><div class="a" style="left:349px;top:898px;width:40px;height:2px;background:#76b9ed"></div><div class="a" style="left:397px;top:898px;width:40px;height:2px;background:#76b9ed"></div><div class="a" style="left:445px;top:898px;width:41px;height:2px;background:#76b9ed"></div><div class="a" style="left:496px;top:898px;width:41px;height:2px;background:#76b9ed"></div><svg class="a" style="left:63px;top:868px;" width="24" height="24" viewBox="0 0 24 24"><circle cx="12" cy="12" r="11" fill="#db4437"/><path d="M12 12L2.5 6.5A11 11 0 0 0 12 23z" fill="#0f9d58"/><path d="M12 12l9.5-5.5A11 11 0 0 1 12 23z" fill="#ffcd40"/><path d="M12 1a11 11 0 0 1 9.5 5.5H12z" fill="#db4437"/><circle cx="12" cy="12" r="5.2" fill="#fff"/><circle cx="12" cy="12" r="4.1" fill="#4285f4"/></svg><svg class="a" style="left:112px;top:868px;" width="24" height="24" viewBox="0 0 24 24"><circle cx="12" cy="12" r="11" fill="#1fa0e3"/><path d="M3 15c1-7 9-9 13-5 2 2 1 5-2 5-2 0-3-1-2-2-5 0-7 5-3 8-4-1-6-3-6-6z" fill="#0c59a4"/><path d="M16 10c3 1 4 4 3 6" stroke="#5ee06a" stroke-width="2.5" fill="none"/></svg><svg class="a" style="left:161px;top:868px;" width="24" height="24" viewBox="0 0 24 24"><circle cx="12" cy="12" r="11" fill="#db4437"/><path d="M12 12L2.5 6.5A11 11 0 0 0 12 23z" fill="#0f9d58"/><path d="M12 12l9.5-5.5A11 11 0 0 1 12 23z" fill="#ffcd40"/><path d="M12 1a11 11 0 0 1 9.5 5.5H12z" fill="#db4437"/><circle cx="12" cy="12" r="5.2" fill="#fff"/><circle cx="12" cy="12" r="4.1" fill="#4285f4"/></svg><div class="a" style="left:174px;top:880px;width:16px;height:16px;border-radius:8px;background:#e8710a;border:1px solid #223644"></div><div class="t" style="left:174px;top:881px;width:16px;text-align:center;font-size:9px;line-height:14px;color:#fff">L</div><svg class="a" style="left:210px;top:869px;" width="24" height="22" viewBox="0 0 24 22"><path d="M1 3h8l2 2h12v15H1z" fill="#e8a93a"/><path d="M1 7h22v13H1z" fill="#f8cf55"/><rect x="6" y="13" width="12" height="5" fill="#2a8ad4"/></svg><svg class="a" style="left:259px;top:868px;" width="24" height="24" viewBox="0 0 24 24"><rect x="1" y="1" width="22" height="22" rx="1.5" fill="#2f4db0"/><rect x="6" y="1" width="12" height="8" fill="#c8d2e8"/><rect x="13" y="2.5" width="3" height="5" fill="#2f4db0"/><rect x="3.5" y="12" width="17" height="10" fill="#fff"/><path d="M5 14h14M5 16.5h14M5 19h14" stroke="#e04848" stroke-width="1"/></svg><svg class="a" style="left:308px;top:868px;" width="24" height="24" viewBox="0 0 24 24"><circle cx="11" cy="11" r="10.5" fill="#2aa3de"/><path d="M5 10.5l11-4.5-2 10-3-2.5-1.5 1.5V13l4-3.5-5 3z" fill="#fff"/></svg><div class="a" style="left:318px;top:878px;width:21px;height:18px;border-radius:9px;background:#6d7278"></div><div class="t" style="left:318px;top:880px;width:21px;text-align:center;font-size:11px;line-height:14px;color:#e8e8e8">39</div><svg class="a" style="left:356px;top:868px;" width="26" height="24" viewBox="0 0 26 24"><circle cx="14" cy="12" r="10" fill="#ed6c47"/><path d="M14 2a10 10 0 0 1 10 10H14z" fill="#ff8f6b"/><rect x="1" y="5.5" width="13" height="13" rx="1.5" fill="#c43e1c"/><text x="7.5" y="16" font-size="10" font-weight="bold" fill="#fff" text-anchor="middle" font-family="Liberation Sans">P</text></svg><svg class="a" style="left:405px;top:868px;" width="26" height="24" viewBox="0 0 26 24"><rect x="8" y="2" width="16" height="20" rx="1.5" fill="#21a366"/><rect x="8" y="7" width="16" height="5" fill="#107c41"/><rect x="8" y="17" width="16" height="5" fill="#185c37"/><rect x="1" y="5.5" width="13" height="13" rx="1.5" fill="#107c41"/><text x="7.5" y="16" font-size="10" font-weight="bold" fill="#fff" text-anchor="middle" font-family="Liberation Sans">X</text></svg><svg class="a" style="left:455px;top:868px;" width="24" height="24" viewBox="0 0 24 24"><rect x="2" y="1" width="20" height="22" fill="#fff"/><path d="M12 4c-1.5 0-1.2 3 .2 6.5 1.3 3 3.5 5.3 5.5 5.8 1.5.4 2.2-.5 1.3-1.2-1.5-1-5.5-.8-8.5.2-2.5.8-5 2.5-5 3.5 0 .8 1.2.5 2-.5 1.5-2 3.5-6.5 4-9.5.3-2.3-.2-4.8.5-4.8z" fill="none" stroke="#d52b1e" stroke-width="1.4"/></svg><svg class="a" style="left:503px;top:868px;" width="26" height="24" viewBox="0 0 26 24"><rect x="8" y="2" width="16" height="20" rx="1.5" fill="#41a5ee"/><rect x="8" y="7" width="16" height="5" fill="#2b7cd3"/><rect x="8" y="12" width="16" height="5" fill="#185abd"/><rect x="8" y="17" width="16" height="5" fill="#103f91"/><rect x="1" y="5.5" width="13" height="13" rx="1.5" fill="#185abd"/><text x="7.5" y="16" font-size="10" font-weight="bold" fill="#fff" text-anchor="middle" font-family="Liberation Sans">W</text></svg><svg class="a" style="left:1325px;top:874px;" width="14" height="10" viewBox="0 0 14 10"><path d="M1.5 8.5L7 3l5.5 5.5" fill="none" stroke="#fff" stroke-width="1.3"/></svg><svg class="a" style="left:1357px;top:871px;" width="14" height="18" viewBox="0 0 14 18"><rect x="4" y="1" width="6" height="10" rx="3" fill="#fff"/><path d="M2 8.5a5 5 0 0 0 10 0M7 13.5v3M4 16.5h6" fill="none" stroke="#fff" stroke-width="1.2"/></svg><svg class="a" style="left:1390px;top:872px;" width="16" height="16" viewBox="0 0 16 16"><path d="M1.5 14A12.5 12.5 0 0 1 14 1.5M4.5 14A9.5 9.5 0 0 1 14 4.5M7.5 14A6.5 6.5 0 0 1 14 7.5" fill="none" stroke="#fff" stroke-width="1.1"/><circle cx="12.5" cy="12.5" r="1.5" fill="#fff"/></svg><svg class="a" style="left:1420px;top:873px;" width="18" height="14" viewBox="0 0 18 14"><path d="M2 1v3M5 1v3M1 4h5v2a2.5 2.5 0 0 1-5 0z" fill="#fff" stroke="#fff" stroke-width=".8"/><path d="M3.5 8v4" stroke="#fff" stroke-width="1"/><rect x="5" y="4" width="11" height="7" fill="none" stroke="#fff" stroke-width="1.1"/><rect x="7" y="5.5" width="8" height="4" fill="#fff"/><rect x="16" y="6" width="1.5" height="3" fill="#fff"/></svg><div class="t" style="left:1452px;top:873px;font-size:11.5px;line-height:14px;color:#fff">УКР</div><div class="t" style="left:1486px;top:864px;width:55px;text-align:center;font-size:11.3px;line-height:16px;color:#fff">8:27<br>04.11.2024</div><svg class="a" style="left:1558px;top:871px;" width="18" height="17" viewBox="0 0 18 17"><path d="M1 1h15.5v11h-5l-2.8 3-2.8-3H1z" fill="none" stroke="#fff" stroke-width="1.1"/></svg><div class="a" style="left:1595px;top:860px;width:1px;height:40px;background:#6a7180"></div></body></html>
